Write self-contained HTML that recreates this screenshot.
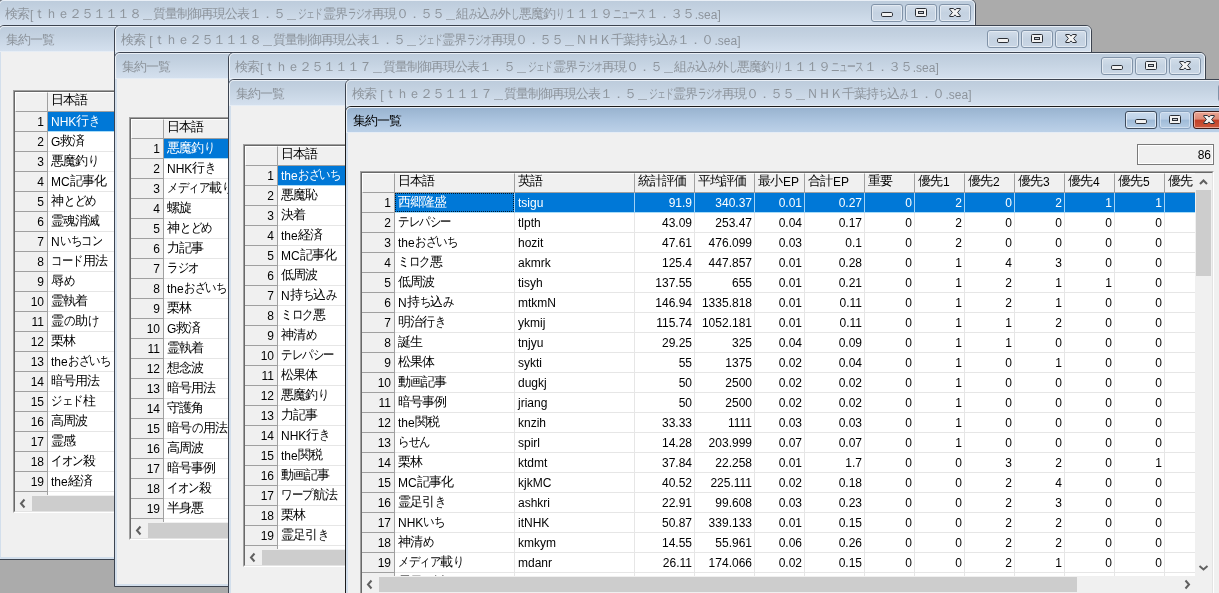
<!DOCTYPE html><html><head><meta charset="utf-8"><style>
*{box-sizing:border-box;margin:0;padding:0}
html,body{width:1219px;height:593px;overflow:hidden;background:#ababab;font-family:"Liberation Sans",sans-serif;font-size:12px;}
.w{position:absolute;border:1px solid #3d4450;border-radius:6px 6px 0 0;background:#d3dfec;}
.tb{position:absolute;left:0;right:0;top:0;height:26px;border-top:1px solid #e9eff6;border-bottom:1px solid #e6edf5;border-left:1px solid #eef3f8;border-right:1px solid #eef3f8;border-radius:5px 5px 0 0;
 background:linear-gradient(#bdccdc,#c5d3e2 40%,#d4e0ee);}
.tt{position:absolute;left:6px;top:7px;color:#8d949c;white-space:nowrap;line-height:14px;}
.btn{position:absolute;top:4px;width:32px;height:18px;border:1px solid #8193a8;border-radius:3px;background:linear-gradient(#d3deea,#c4d2e1 50%,#c9d6e5);box-shadow:inset 0 0 0 1px #e3eaf2;}
.body{position:absolute;left:2px;right:2px;top:26px;bottom:2px;background:#f0f0f0;}
.fr{position:absolute;border-left:1px solid #3d4450;}
.grid{position:absolute;background:#fff;border:1px solid #a0a0a0;border-right-color:#fff;border-bottom-color:#fff;overflow:hidden;}
.gin{position:absolute;left:0;top:0;right:0;bottom:0;overflow:hidden;border:1px solid #696969;border-right-color:#e3e3e3;border-bottom-color:#e3e3e3;}
.c{position:absolute;height:19px;line-height:20px;white-space:nowrap;overflow:hidden;padding:0 3px;color:#000;}
.h{background:#f0f0f0;}
</style></head><body><div id="root" style="position:absolute;left:0;top:0;width:1219px;height:593px;overflow:hidden;will-change:transform">
<div class="w" style="left:-2px;top:-1px;width:978px;height:60px"><div class="tb"><div class="tt" style="left:5px"><span style="font-size:13px;letter-spacing:-1px;margin-right:1px;position:relative;top:-1px">検索</span>[<span style="font-size:13px;letter-spacing:-1px;margin-right:1px;position:relative;top:-1px">ｔｈｅ２５１１１８＿質量制御再現公表１．５＿</span><span style="display:inline-block;width:24.30px;position:relative;top:-1px;white-space:nowrap"><span style="display:inline-block;font-size:13px;letter-spacing:-1px;transform:scaleX(0.675);transform-origin:0 0">ジェド</span></span><span style="font-size:13px;letter-spacing:-1px;margin-right:1px;position:relative;top:-1px">霊界</span><span style="display:inline-block;width:24.30px;position:relative;top:-1px;white-space:nowrap"><span style="display:inline-block;font-size:13px;letter-spacing:-1px;transform:scaleX(0.675);transform-origin:0 0">ラジオ</span></span><span style="font-size:13px;letter-spacing:-1px;margin-right:1px;position:relative;top:-1px">再現０．５５＿組</span><span style="display:inline-block;width:8.10px;position:relative;top:-1px;white-space:nowrap"><span style="display:inline-block;font-size:13px;letter-spacing:-1px;transform:scaleX(0.675);transform-origin:0 0">み</span></span><span style="font-size:13px;letter-spacing:-1px;margin-right:1px;position:relative;top:-1px">込</span><span style="display:inline-block;width:8.10px;position:relative;top:-1px;white-space:nowrap"><span style="display:inline-block;font-size:13px;letter-spacing:-1px;transform:scaleX(0.675);transform-origin:0 0">み</span></span><span style="font-size:13px;letter-spacing:-1px;margin-right:1px;position:relative;top:-1px">外</span><span style="display:inline-block;width:8.10px;position:relative;top:-1px;white-space:nowrap"><span style="display:inline-block;font-size:13px;letter-spacing:-1px;transform:scaleX(0.675);transform-origin:0 0">し</span></span><span style="font-size:13px;letter-spacing:-1px;margin-right:1px;position:relative;top:-1px">悪魔釣</span><span style="display:inline-block;width:8.10px;position:relative;top:-1px;white-space:nowrap"><span style="display:inline-block;font-size:13px;letter-spacing:-1px;transform:scaleX(0.675);transform-origin:0 0">り</span></span><span style="font-size:13px;letter-spacing:-1px;margin-right:1px;position:relative;top:-1px">１１１９</span><span style="display:inline-block;width:32.40px;position:relative;top:-1px;white-space:nowrap"><span style="display:inline-block;font-size:13px;letter-spacing:-1px;transform:scaleX(0.675);transform-origin:0 0">ニュース</span></span><span style="font-size:13px;letter-spacing:-1px;margin-right:1px;position:relative;top:-1px">１．３５</span>.sea]</div>
<div class="btn" style="left:871px;top:3px"><svg width="32" height="18" style="position:absolute;left:-1px;top:-1px"><rect x="10.5" y="8.5" width="11" height="4" rx="1.2" fill="#f2f2f2" stroke="#2b2f36" stroke-width="1"/></svg></div><div class="btn" style="left:905px;top:3px"><svg width="32" height="18" style="position:absolute;left:-1px;top:-1px"><rect x="10.5" y="4.5" width="11" height="8" rx="1" fill="#f2f2f2" stroke="#2b2f36"/><rect x="13.5" y="7.5" width="5" height="2" fill="#c8ccd2" stroke="#2b2f36"/></svg></div><div class="btn" style="left:939px;top:3px"><svg width="32" height="18" style="position:absolute;left:-1px;top:-1px"><path transform="translate(10,4)" d="M0.5 1 Q0.5 0.5 1 0.5 L4.3 0.5 L6 2.1 L7.7 0.5 L11 0.5 Q11.5 0.5 11.5 1 L8.6 4.5 L11.5 8 Q11.5 8.5 11 8.5 L7.7 8.5 L6 6.9 L4.3 8.5 L1 8.5 Q0.5 8.5 0.5 8 L3.4 4.5 Z" fill="#f4f4f4" stroke="#2b2f36" stroke-width="1" stroke-linejoin="round"/></svg></div>
</div></div>
<div class="w" style="left:-2px;top:25px;width:978px;height:535px;">
<div class="tb" style=""><div class="tt" style="left:6px;"><span style="font-size:13px;letter-spacing:-1px;margin-right:1px;position:relative;top:-1px">集約一覧</span></div></div>
<div class="body"></div></div>
<div class="grid" style="left:13px;top:90px;width:139px;height:423px"><div class="gin">
<div class="c h" style="left:0;top:0;width:33px;height:20px;border-right:1px solid #a0a0a0;border-bottom:1px solid #a0a0a0;border-top:1px solid #fff;border-left:1px solid #fff"></div>
<div class="c h" style="left:33px;top:0;width:170px;height:20px;border-right:1px solid #a0a0a0;border-bottom:1px solid #a0a0a0;border-top:1px solid #fff;padding-left:3px;line-height:15px"><span style="font-size:13px;letter-spacing:-1px;margin-right:1px;position:relative;top:-1px">日本語</span></div>
<div class="c h" style="left:0;top:20px;width:33px;height:20px;border-right:1px solid #a0a0a0;border-bottom:1px solid #a0a0a0;text-align:right;padding-right:3px">1</div>
<div class="c" style="left:33px;top:20px;width:170px;height:20px;border-bottom:1px solid #e6e6e6;background:#0078d7;color:#fff;border-right:1px solid #9fd0f5;border-bottom-color:#a8dcf8;padding-left:3px;">NHK<span style="font-size:13px;letter-spacing:-1px;margin-right:1px;position:relative;top:-1px">行</span><span style="display:inline-block;width:10.50px;position:relative;top:-1px;white-space:nowrap"><span style="display:inline-block;font-size:13px;letter-spacing:-1px;transform:scaleX(0.875);transform-origin:0 0">き</span></span></div>
<div class="c h" style="left:0;top:40px;width:33px;height:20px;border-right:1px solid #a0a0a0;border-bottom:1px solid #a0a0a0;text-align:right;padding-right:3px">2</div>
<div class="c" style="left:33px;top:40px;width:170px;height:20px;border-bottom:1px solid #e6e6e6;border-right:1px solid #e6e6e6;padding-left:3px;">G<span style="font-size:13px;letter-spacing:-1px;margin-right:1px;position:relative;top:-1px">救済</span></div>
<div class="c h" style="left:0;top:60px;width:33px;height:20px;border-right:1px solid #a0a0a0;border-bottom:1px solid #a0a0a0;text-align:right;padding-right:3px">3</div>
<div class="c" style="left:33px;top:60px;width:170px;height:20px;border-bottom:1px solid #e6e6e6;border-right:1px solid #e6e6e6;padding-left:3px;"><span style="font-size:13px;letter-spacing:-1px;margin-right:1px;position:relative;top:-1px">悪魔釣</span><span style="display:inline-block;width:10.50px;position:relative;top:-1px;white-space:nowrap"><span style="display:inline-block;font-size:13px;letter-spacing:-1px;transform:scaleX(0.875);transform-origin:0 0">り</span></span></div>
<div class="c h" style="left:0;top:80px;width:33px;height:20px;border-right:1px solid #a0a0a0;border-bottom:1px solid #a0a0a0;text-align:right;padding-right:3px">4</div>
<div class="c" style="left:33px;top:80px;width:170px;height:20px;border-bottom:1px solid #e6e6e6;border-right:1px solid #e6e6e6;padding-left:3px;">MC<span style="font-size:13px;letter-spacing:-1px;margin-right:1px;position:relative;top:-1px">記事化</span></div>
<div class="c h" style="left:0;top:100px;width:33px;height:20px;border-right:1px solid #a0a0a0;border-bottom:1px solid #a0a0a0;text-align:right;padding-right:3px">5</div>
<div class="c" style="left:33px;top:100px;width:170px;height:20px;border-bottom:1px solid #e6e6e6;border-right:1px solid #e6e6e6;padding-left:3px;"><span style="font-size:13px;letter-spacing:-1px;margin-right:1px;position:relative;top:-1px">神</span><span style="display:inline-block;width:31.50px;position:relative;top:-1px;white-space:nowrap"><span style="display:inline-block;font-size:13px;letter-spacing:-1px;transform:scaleX(0.875);transform-origin:0 0">とどめ</span></span></div>
<div class="c h" style="left:0;top:120px;width:33px;height:20px;border-right:1px solid #a0a0a0;border-bottom:1px solid #a0a0a0;text-align:right;padding-right:3px">6</div>
<div class="c" style="left:33px;top:120px;width:170px;height:20px;border-bottom:1px solid #e6e6e6;border-right:1px solid #e6e6e6;padding-left:3px;"><span style="font-size:13px;letter-spacing:-1px;margin-right:1px;position:relative;top:-1px">霊魂消滅</span></div>
<div class="c h" style="left:0;top:140px;width:33px;height:20px;border-right:1px solid #a0a0a0;border-bottom:1px solid #a0a0a0;text-align:right;padding-right:3px">7</div>
<div class="c" style="left:33px;top:140px;width:170px;height:20px;border-bottom:1px solid #e6e6e6;border-right:1px solid #e6e6e6;padding-left:3px;">N<span style="display:inline-block;width:42.00px;position:relative;top:-1px;white-space:nowrap"><span style="display:inline-block;font-size:13px;letter-spacing:-1px;transform:scaleX(0.875);transform-origin:0 0">いちコン</span></span></div>
<div class="c h" style="left:0;top:160px;width:33px;height:20px;border-right:1px solid #a0a0a0;border-bottom:1px solid #a0a0a0;text-align:right;padding-right:3px">8</div>
<div class="c" style="left:33px;top:160px;width:170px;height:20px;border-bottom:1px solid #e6e6e6;border-right:1px solid #e6e6e6;padding-left:3px;"><span style="display:inline-block;width:31.50px;position:relative;top:-1px;white-space:nowrap"><span style="display:inline-block;font-size:13px;letter-spacing:-1px;transform:scaleX(0.875);transform-origin:0 0">コード</span></span><span style="font-size:13px;letter-spacing:-1px;margin-right:1px;position:relative;top:-1px">用法</span></div>
<div class="c h" style="left:0;top:180px;width:33px;height:20px;border-right:1px solid #a0a0a0;border-bottom:1px solid #a0a0a0;text-align:right;padding-right:3px">9</div>
<div class="c" style="left:33px;top:180px;width:170px;height:20px;border-bottom:1px solid #e6e6e6;border-right:1px solid #e6e6e6;padding-left:3px;"><span style="font-size:13px;letter-spacing:-1px;margin-right:1px;position:relative;top:-1px">辱</span><span style="display:inline-block;width:10.50px;position:relative;top:-1px;white-space:nowrap"><span style="display:inline-block;font-size:13px;letter-spacing:-1px;transform:scaleX(0.875);transform-origin:0 0">め</span></span></div>
<div class="c h" style="left:0;top:200px;width:33px;height:20px;border-right:1px solid #a0a0a0;border-bottom:1px solid #a0a0a0;text-align:right;padding-right:3px">10</div>
<div class="c" style="left:33px;top:200px;width:170px;height:20px;border-bottom:1px solid #e6e6e6;border-right:1px solid #e6e6e6;padding-left:3px;"><span style="font-size:13px;letter-spacing:-1px;margin-right:1px;position:relative;top:-1px">霊執着</span></div>
<div class="c h" style="left:0;top:220px;width:33px;height:20px;border-right:1px solid #a0a0a0;border-bottom:1px solid #a0a0a0;text-align:right;padding-right:3px">11</div>
<div class="c" style="left:33px;top:220px;width:170px;height:20px;border-bottom:1px solid #e6e6e6;border-right:1px solid #e6e6e6;padding-left:3px;"><span style="font-size:13px;letter-spacing:-1px;margin-right:1px;position:relative;top:-1px">霊</span><span style="display:inline-block;width:10.50px;position:relative;top:-1px;white-space:nowrap"><span style="display:inline-block;font-size:13px;letter-spacing:-1px;transform:scaleX(0.875);transform-origin:0 0">の</span></span><span style="font-size:13px;letter-spacing:-1px;margin-right:1px;position:relative;top:-1px">助</span><span style="display:inline-block;width:10.50px;position:relative;top:-1px;white-space:nowrap"><span style="display:inline-block;font-size:13px;letter-spacing:-1px;transform:scaleX(0.875);transform-origin:0 0">け</span></span></div>
<div class="c h" style="left:0;top:240px;width:33px;height:20px;border-right:1px solid #a0a0a0;border-bottom:1px solid #a0a0a0;text-align:right;padding-right:3px">12</div>
<div class="c" style="left:33px;top:240px;width:170px;height:20px;border-bottom:1px solid #e6e6e6;border-right:1px solid #e6e6e6;padding-left:3px;"><span style="font-size:13px;letter-spacing:-1px;margin-right:1px;position:relative;top:-1px">栗林</span></div>
<div class="c h" style="left:0;top:260px;width:33px;height:20px;border-right:1px solid #a0a0a0;border-bottom:1px solid #a0a0a0;text-align:right;padding-right:3px">13</div>
<div class="c" style="left:33px;top:260px;width:170px;height:20px;border-bottom:1px solid #e6e6e6;border-right:1px solid #e6e6e6;padding-left:3px;">the<span style="display:inline-block;width:42.00px;position:relative;top:-1px;white-space:nowrap"><span style="display:inline-block;font-size:13px;letter-spacing:-1px;transform:scaleX(0.875);transform-origin:0 0">おざいち</span></span></div>
<div class="c h" style="left:0;top:280px;width:33px;height:20px;border-right:1px solid #a0a0a0;border-bottom:1px solid #a0a0a0;text-align:right;padding-right:3px">14</div>
<div class="c" style="left:33px;top:280px;width:170px;height:20px;border-bottom:1px solid #e6e6e6;border-right:1px solid #e6e6e6;padding-left:3px;"><span style="font-size:13px;letter-spacing:-1px;margin-right:1px;position:relative;top:-1px">暗号用法</span></div>
<div class="c h" style="left:0;top:300px;width:33px;height:20px;border-right:1px solid #a0a0a0;border-bottom:1px solid #a0a0a0;text-align:right;padding-right:3px">15</div>
<div class="c" style="left:33px;top:300px;width:170px;height:20px;border-bottom:1px solid #e6e6e6;border-right:1px solid #e6e6e6;padding-left:3px;"><span style="display:inline-block;width:31.50px;position:relative;top:-1px;white-space:nowrap"><span style="display:inline-block;font-size:13px;letter-spacing:-1px;transform:scaleX(0.875);transform-origin:0 0">ジェド</span></span><span style="font-size:13px;letter-spacing:-1px;margin-right:1px;position:relative;top:-1px">柱</span></div>
<div class="c h" style="left:0;top:320px;width:33px;height:20px;border-right:1px solid #a0a0a0;border-bottom:1px solid #a0a0a0;text-align:right;padding-right:3px">16</div>
<div class="c" style="left:33px;top:320px;width:170px;height:20px;border-bottom:1px solid #e6e6e6;border-right:1px solid #e6e6e6;padding-left:3px;"><span style="font-size:13px;letter-spacing:-1px;margin-right:1px;position:relative;top:-1px">高周波</span></div>
<div class="c h" style="left:0;top:340px;width:33px;height:20px;border-right:1px solid #a0a0a0;border-bottom:1px solid #a0a0a0;text-align:right;padding-right:3px">17</div>
<div class="c" style="left:33px;top:340px;width:170px;height:20px;border-bottom:1px solid #e6e6e6;border-right:1px solid #e6e6e6;padding-left:3px;"><span style="font-size:13px;letter-spacing:-1px;margin-right:1px;position:relative;top:-1px">霊感</span></div>
<div class="c h" style="left:0;top:360px;width:33px;height:20px;border-right:1px solid #a0a0a0;border-bottom:1px solid #a0a0a0;text-align:right;padding-right:3px">18</div>
<div class="c" style="left:33px;top:360px;width:170px;height:20px;border-bottom:1px solid #e6e6e6;border-right:1px solid #e6e6e6;padding-left:3px;"><span style="display:inline-block;width:31.50px;position:relative;top:-1px;white-space:nowrap"><span style="display:inline-block;font-size:13px;letter-spacing:-1px;transform:scaleX(0.875);transform-origin:0 0">イオン</span></span><span style="font-size:13px;letter-spacing:-1px;margin-right:1px;position:relative;top:-1px">殺</span></div>
<div class="c h" style="left:0;top:380px;width:33px;height:20px;border-right:1px solid #a0a0a0;border-bottom:1px solid #a0a0a0;text-align:right;padding-right:3px">19</div>
<div class="c" style="left:33px;top:380px;width:170px;height:20px;border-bottom:1px solid #e6e6e6;border-right:1px solid #e6e6e6;padding-left:3px;">the<span style="font-size:13px;letter-spacing:-1px;margin-right:1px;position:relative;top:-1px">経済</span></div>
<div class="c h" style="left:0;top:400px;width:33px;height:20px;border-right:1px solid #a0a0a0;border-bottom:1px solid #a0a0a0;text-align:right;padding-right:3px">20</div>
<div class="c" style="left:33px;top:400px;width:170px;height:20px;border-bottom:1px solid #e6e6e6;border-right:1px solid #e6e6e6;padding-left:3px;"><span style="display:inline-block;width:31.50px;position:relative;top:-1px;white-space:nowrap"><span style="display:inline-block;font-size:13px;letter-spacing:-1px;transform:scaleX(0.875);transform-origin:0 0">コード</span></span></div>
<div style="position:absolute;left:0;top:403px;width:139px;height:17px;background:#f0f0f0"></div>
<svg width="17" height="17" style="position:absolute;left:0;top:403px"><path d="M9.5 4.5 L6 8.5 L9.5 12.5" fill="none" stroke="#606060" stroke-width="2"/></svg>
<div style="position:absolute;left:17px;top:404px;width:123px;height:15px;background:#cdcdcd"></div>
</div></div>
<div class="w" style="left:114px;top:25px;width:978px;height:60px"><div class="tb"><div class="tt" style="left:5px"><span style="font-size:13px;letter-spacing:-1px;margin-right:1px;position:relative;top:-1px">検索</span> [<span style="font-size:13px;letter-spacing:-1px;margin-right:1px;position:relative;top:-1px">ｔｈｅ２５１１１８＿質量制御再現公表１．５＿</span><span style="display:inline-block;width:24.30px;position:relative;top:-1px;white-space:nowrap"><span style="display:inline-block;font-size:13px;letter-spacing:-1px;transform:scaleX(0.675);transform-origin:0 0">ジェド</span></span><span style="font-size:13px;letter-spacing:-1px;margin-right:1px;position:relative;top:-1px">霊界</span><span style="display:inline-block;width:24.30px;position:relative;top:-1px;white-space:nowrap"><span style="display:inline-block;font-size:13px;letter-spacing:-1px;transform:scaleX(0.675);transform-origin:0 0">ラジオ</span></span><span style="font-size:13px;letter-spacing:-1px;margin-right:1px;position:relative;top:-1px">再現０．５５＿ＮＨＫ千葉持</span><span style="display:inline-block;width:8.10px;position:relative;top:-1px;white-space:nowrap"><span style="display:inline-block;font-size:13px;letter-spacing:-1px;transform:scaleX(0.675);transform-origin:0 0">ち</span></span><span style="font-size:13px;letter-spacing:-1px;margin-right:1px;position:relative;top:-1px">込</span><span style="display:inline-block;width:8.10px;position:relative;top:-1px;white-space:nowrap"><span style="display:inline-block;font-size:13px;letter-spacing:-1px;transform:scaleX(0.675);transform-origin:0 0">み</span></span><span style="font-size:13px;letter-spacing:-1px;margin-right:1px;position:relative;top:-1px">１．０</span>.sea]</div>
<div class="btn" style="left:871px;top:3px"><svg width="32" height="18" style="position:absolute;left:-1px;top:-1px"><rect x="10.5" y="8.5" width="11" height="4" rx="1.2" fill="#f2f2f2" stroke="#2b2f36" stroke-width="1"/></svg></div><div class="btn" style="left:905px;top:3px"><svg width="32" height="18" style="position:absolute;left:-1px;top:-1px"><rect x="10.5" y="4.5" width="11" height="8" rx="1" fill="#f2f2f2" stroke="#2b2f36"/><rect x="13.5" y="7.5" width="5" height="2" fill="#c8ccd2" stroke="#2b2f36"/></svg></div><div class="btn" style="left:939px;top:3px"><svg width="32" height="18" style="position:absolute;left:-1px;top:-1px"><path transform="translate(10,4)" d="M0.5 1 Q0.5 0.5 1 0.5 L4.3 0.5 L6 2.1 L7.7 0.5 L11 0.5 Q11.5 0.5 11.5 1 L8.6 4.5 L11.5 8 Q11.5 8.5 11 8.5 L7.7 8.5 L6 6.9 L4.3 8.5 L1 8.5 Q0.5 8.5 0.5 8 L3.4 4.5 Z" fill="#f4f4f4" stroke="#2b2f36" stroke-width="1" stroke-linejoin="round"/></svg></div>
</div></div>
<div class="w" style="left:114px;top:52px;width:978px;height:535px;">
<div class="tb" style=""><div class="tt" style="left:6px;"><span style="font-size:13px;letter-spacing:-1px;margin-right:1px;position:relative;top:-1px">集約一覧</span></div></div>
<div class="body"></div></div>
<div class="grid" style="left:129px;top:117px;width:139px;height:423px"><div class="gin">
<div class="c h" style="left:0;top:0;width:33px;height:20px;border-right:1px solid #a0a0a0;border-bottom:1px solid #a0a0a0;border-top:1px solid #fff;border-left:1px solid #fff"></div>
<div class="c h" style="left:33px;top:0;width:170px;height:20px;border-right:1px solid #a0a0a0;border-bottom:1px solid #a0a0a0;border-top:1px solid #fff;padding-left:3px;line-height:15px"><span style="font-size:13px;letter-spacing:-1px;margin-right:1px;position:relative;top:-1px">日本語</span></div>
<div class="c h" style="left:0;top:20px;width:33px;height:20px;border-right:1px solid #a0a0a0;border-bottom:1px solid #a0a0a0;text-align:right;padding-right:3px">1</div>
<div class="c" style="left:33px;top:20px;width:170px;height:20px;border-bottom:1px solid #e6e6e6;background:#0078d7;color:#fff;border-right:1px solid #9fd0f5;border-bottom-color:#a8dcf8;padding-left:3px;"><span style="font-size:13px;letter-spacing:-1px;margin-right:1px;position:relative;top:-1px">悪魔釣</span><span style="display:inline-block;width:10.50px;position:relative;top:-1px;white-space:nowrap"><span style="display:inline-block;font-size:13px;letter-spacing:-1px;transform:scaleX(0.875);transform-origin:0 0">り</span></span></div>
<div class="c h" style="left:0;top:40px;width:33px;height:20px;border-right:1px solid #a0a0a0;border-bottom:1px solid #a0a0a0;text-align:right;padding-right:3px">2</div>
<div class="c" style="left:33px;top:40px;width:170px;height:20px;border-bottom:1px solid #e6e6e6;border-right:1px solid #e6e6e6;padding-left:3px;">NHK<span style="font-size:13px;letter-spacing:-1px;margin-right:1px;position:relative;top:-1px">行</span><span style="display:inline-block;width:10.50px;position:relative;top:-1px;white-space:nowrap"><span style="display:inline-block;font-size:13px;letter-spacing:-1px;transform:scaleX(0.875);transform-origin:0 0">き</span></span></div>
<div class="c h" style="left:0;top:60px;width:33px;height:20px;border-right:1px solid #a0a0a0;border-bottom:1px solid #a0a0a0;text-align:right;padding-right:3px">3</div>
<div class="c" style="left:33px;top:60px;width:170px;height:20px;border-bottom:1px solid #e6e6e6;border-right:1px solid #e6e6e6;padding-left:3px;"><span style="display:inline-block;width:42.00px;position:relative;top:-1px;white-space:nowrap"><span style="display:inline-block;font-size:13px;letter-spacing:-1px;transform:scaleX(0.875);transform-origin:0 0">メディア</span></span><span style="font-size:13px;letter-spacing:-1px;margin-right:1px;position:relative;top:-1px">載</span><span style="display:inline-block;width:10.50px;position:relative;top:-1px;white-space:nowrap"><span style="display:inline-block;font-size:13px;letter-spacing:-1px;transform:scaleX(0.875);transform-origin:0 0">り</span></span></div>
<div class="c h" style="left:0;top:80px;width:33px;height:20px;border-right:1px solid #a0a0a0;border-bottom:1px solid #a0a0a0;text-align:right;padding-right:3px">4</div>
<div class="c" style="left:33px;top:80px;width:170px;height:20px;border-bottom:1px solid #e6e6e6;border-right:1px solid #e6e6e6;padding-left:3px;"><span style="font-size:13px;letter-spacing:-1px;margin-right:1px;position:relative;top:-1px">螺旋</span></div>
<div class="c h" style="left:0;top:100px;width:33px;height:20px;border-right:1px solid #a0a0a0;border-bottom:1px solid #a0a0a0;text-align:right;padding-right:3px">5</div>
<div class="c" style="left:33px;top:100px;width:170px;height:20px;border-bottom:1px solid #e6e6e6;border-right:1px solid #e6e6e6;padding-left:3px;"><span style="font-size:13px;letter-spacing:-1px;margin-right:1px;position:relative;top:-1px">神</span><span style="display:inline-block;width:31.50px;position:relative;top:-1px;white-space:nowrap"><span style="display:inline-block;font-size:13px;letter-spacing:-1px;transform:scaleX(0.875);transform-origin:0 0">とどめ</span></span></div>
<div class="c h" style="left:0;top:120px;width:33px;height:20px;border-right:1px solid #a0a0a0;border-bottom:1px solid #a0a0a0;text-align:right;padding-right:3px">6</div>
<div class="c" style="left:33px;top:120px;width:170px;height:20px;border-bottom:1px solid #e6e6e6;border-right:1px solid #e6e6e6;padding-left:3px;"><span style="font-size:13px;letter-spacing:-1px;margin-right:1px;position:relative;top:-1px">力記事</span></div>
<div class="c h" style="left:0;top:140px;width:33px;height:20px;border-right:1px solid #a0a0a0;border-bottom:1px solid #a0a0a0;text-align:right;padding-right:3px">7</div>
<div class="c" style="left:33px;top:140px;width:170px;height:20px;border-bottom:1px solid #e6e6e6;border-right:1px solid #e6e6e6;padding-left:3px;"><span style="display:inline-block;width:31.50px;position:relative;top:-1px;white-space:nowrap"><span style="display:inline-block;font-size:13px;letter-spacing:-1px;transform:scaleX(0.875);transform-origin:0 0">ラジオ</span></span></div>
<div class="c h" style="left:0;top:160px;width:33px;height:20px;border-right:1px solid #a0a0a0;border-bottom:1px solid #a0a0a0;text-align:right;padding-right:3px">8</div>
<div class="c" style="left:33px;top:160px;width:170px;height:20px;border-bottom:1px solid #e6e6e6;border-right:1px solid #e6e6e6;padding-left:3px;">the<span style="display:inline-block;width:42.00px;position:relative;top:-1px;white-space:nowrap"><span style="display:inline-block;font-size:13px;letter-spacing:-1px;transform:scaleX(0.875);transform-origin:0 0">おざいち</span></span></div>
<div class="c h" style="left:0;top:180px;width:33px;height:20px;border-right:1px solid #a0a0a0;border-bottom:1px solid #a0a0a0;text-align:right;padding-right:3px">9</div>
<div class="c" style="left:33px;top:180px;width:170px;height:20px;border-bottom:1px solid #e6e6e6;border-right:1px solid #e6e6e6;padding-left:3px;"><span style="font-size:13px;letter-spacing:-1px;margin-right:1px;position:relative;top:-1px">栗林</span></div>
<div class="c h" style="left:0;top:200px;width:33px;height:20px;border-right:1px solid #a0a0a0;border-bottom:1px solid #a0a0a0;text-align:right;padding-right:3px">10</div>
<div class="c" style="left:33px;top:200px;width:170px;height:20px;border-bottom:1px solid #e6e6e6;border-right:1px solid #e6e6e6;padding-left:3px;">G<span style="font-size:13px;letter-spacing:-1px;margin-right:1px;position:relative;top:-1px">救済</span></div>
<div class="c h" style="left:0;top:220px;width:33px;height:20px;border-right:1px solid #a0a0a0;border-bottom:1px solid #a0a0a0;text-align:right;padding-right:3px">11</div>
<div class="c" style="left:33px;top:220px;width:170px;height:20px;border-bottom:1px solid #e6e6e6;border-right:1px solid #e6e6e6;padding-left:3px;"><span style="font-size:13px;letter-spacing:-1px;margin-right:1px;position:relative;top:-1px">霊執着</span></div>
<div class="c h" style="left:0;top:240px;width:33px;height:20px;border-right:1px solid #a0a0a0;border-bottom:1px solid #a0a0a0;text-align:right;padding-right:3px">12</div>
<div class="c" style="left:33px;top:240px;width:170px;height:20px;border-bottom:1px solid #e6e6e6;border-right:1px solid #e6e6e6;padding-left:3px;"><span style="font-size:13px;letter-spacing:-1px;margin-right:1px;position:relative;top:-1px">想念波</span></div>
<div class="c h" style="left:0;top:260px;width:33px;height:20px;border-right:1px solid #a0a0a0;border-bottom:1px solid #a0a0a0;text-align:right;padding-right:3px">13</div>
<div class="c" style="left:33px;top:260px;width:170px;height:20px;border-bottom:1px solid #e6e6e6;border-right:1px solid #e6e6e6;padding-left:3px;"><span style="font-size:13px;letter-spacing:-1px;margin-right:1px;position:relative;top:-1px">暗号用法</span></div>
<div class="c h" style="left:0;top:280px;width:33px;height:20px;border-right:1px solid #a0a0a0;border-bottom:1px solid #a0a0a0;text-align:right;padding-right:3px">14</div>
<div class="c" style="left:33px;top:280px;width:170px;height:20px;border-bottom:1px solid #e6e6e6;border-right:1px solid #e6e6e6;padding-left:3px;"><span style="font-size:13px;letter-spacing:-1px;margin-right:1px;position:relative;top:-1px">守護角</span></div>
<div class="c h" style="left:0;top:300px;width:33px;height:20px;border-right:1px solid #a0a0a0;border-bottom:1px solid #a0a0a0;text-align:right;padding-right:3px">15</div>
<div class="c" style="left:33px;top:300px;width:170px;height:20px;border-bottom:1px solid #e6e6e6;border-right:1px solid #e6e6e6;padding-left:3px;"><span style="font-size:13px;letter-spacing:-1px;margin-right:1px;position:relative;top:-1px">暗号</span><span style="display:inline-block;width:10.50px;position:relative;top:-1px;white-space:nowrap"><span style="display:inline-block;font-size:13px;letter-spacing:-1px;transform:scaleX(0.875);transform-origin:0 0">の</span></span><span style="font-size:13px;letter-spacing:-1px;margin-right:1px;position:relative;top:-1px">用法</span></div>
<div class="c h" style="left:0;top:320px;width:33px;height:20px;border-right:1px solid #a0a0a0;border-bottom:1px solid #a0a0a0;text-align:right;padding-right:3px">16</div>
<div class="c" style="left:33px;top:320px;width:170px;height:20px;border-bottom:1px solid #e6e6e6;border-right:1px solid #e6e6e6;padding-left:3px;"><span style="font-size:13px;letter-spacing:-1px;margin-right:1px;position:relative;top:-1px">高周波</span></div>
<div class="c h" style="left:0;top:340px;width:33px;height:20px;border-right:1px solid #a0a0a0;border-bottom:1px solid #a0a0a0;text-align:right;padding-right:3px">17</div>
<div class="c" style="left:33px;top:340px;width:170px;height:20px;border-bottom:1px solid #e6e6e6;border-right:1px solid #e6e6e6;padding-left:3px;"><span style="font-size:13px;letter-spacing:-1px;margin-right:1px;position:relative;top:-1px">暗号事例</span></div>
<div class="c h" style="left:0;top:360px;width:33px;height:20px;border-right:1px solid #a0a0a0;border-bottom:1px solid #a0a0a0;text-align:right;padding-right:3px">18</div>
<div class="c" style="left:33px;top:360px;width:170px;height:20px;border-bottom:1px solid #e6e6e6;border-right:1px solid #e6e6e6;padding-left:3px;"><span style="display:inline-block;width:31.50px;position:relative;top:-1px;white-space:nowrap"><span style="display:inline-block;font-size:13px;letter-spacing:-1px;transform:scaleX(0.875);transform-origin:0 0">イオン</span></span><span style="font-size:13px;letter-spacing:-1px;margin-right:1px;position:relative;top:-1px">殺</span></div>
<div class="c h" style="left:0;top:380px;width:33px;height:20px;border-right:1px solid #a0a0a0;border-bottom:1px solid #a0a0a0;text-align:right;padding-right:3px">19</div>
<div class="c" style="left:33px;top:380px;width:170px;height:20px;border-bottom:1px solid #e6e6e6;border-right:1px solid #e6e6e6;padding-left:3px;"><span style="font-size:13px;letter-spacing:-1px;margin-right:1px;position:relative;top:-1px">半身悪</span></div>
<div class="c h" style="left:0;top:400px;width:33px;height:20px;border-right:1px solid #a0a0a0;border-bottom:1px solid #a0a0a0;text-align:right;padding-right:3px">20</div>
<div class="c" style="left:33px;top:400px;width:170px;height:20px;border-bottom:1px solid #e6e6e6;border-right:1px solid #e6e6e6;padding-left:3px;"><span style="display:inline-block;width:42.00px;position:relative;top:-1px;white-space:nowrap"><span style="display:inline-block;font-size:13px;letter-spacing:-1px;transform:scaleX(0.875);transform-origin:0 0">メディア</span></span></div>
<div style="position:absolute;left:0;top:403px;width:139px;height:17px;background:#f0f0f0"></div>
<svg width="17" height="17" style="position:absolute;left:0;top:403px"><path d="M9.5 4.5 L6 8.5 L9.5 12.5" fill="none" stroke="#606060" stroke-width="2"/></svg>
<div style="position:absolute;left:17px;top:404px;width:123px;height:15px;background:#cdcdcd"></div>
</div></div>
<div class="w" style="left:228px;top:52px;width:978px;height:60px"><div class="tb"><div class="tt" style="left:5px"><span style="font-size:13px;letter-spacing:-1px;margin-right:1px;position:relative;top:-1px">検索</span>[<span style="font-size:13px;letter-spacing:-1px;margin-right:1px;position:relative;top:-1px">ｔｈｅ２５１１１７＿質量制御再現公表１．５＿</span><span style="display:inline-block;width:24.30px;position:relative;top:-1px;white-space:nowrap"><span style="display:inline-block;font-size:13px;letter-spacing:-1px;transform:scaleX(0.675);transform-origin:0 0">ジェド</span></span><span style="font-size:13px;letter-spacing:-1px;margin-right:1px;position:relative;top:-1px">霊界</span><span style="display:inline-block;width:24.30px;position:relative;top:-1px;white-space:nowrap"><span style="display:inline-block;font-size:13px;letter-spacing:-1px;transform:scaleX(0.675);transform-origin:0 0">ラジオ</span></span><span style="font-size:13px;letter-spacing:-1px;margin-right:1px;position:relative;top:-1px">再現０．５＿組</span><span style="display:inline-block;width:8.10px;position:relative;top:-1px;white-space:nowrap"><span style="display:inline-block;font-size:13px;letter-spacing:-1px;transform:scaleX(0.675);transform-origin:0 0">み</span></span><span style="font-size:13px;letter-spacing:-1px;margin-right:1px;position:relative;top:-1px">込</span><span style="display:inline-block;width:8.10px;position:relative;top:-1px;white-space:nowrap"><span style="display:inline-block;font-size:13px;letter-spacing:-1px;transform:scaleX(0.675);transform-origin:0 0">み</span></span><span style="font-size:13px;letter-spacing:-1px;margin-right:1px;position:relative;top:-1px">外</span><span style="display:inline-block;width:8.10px;position:relative;top:-1px;white-space:nowrap"><span style="display:inline-block;font-size:13px;letter-spacing:-1px;transform:scaleX(0.675);transform-origin:0 0">し</span></span><span style="font-size:13px;letter-spacing:-1px;margin-right:1px;position:relative;top:-1px">悪魔釣</span><span style="display:inline-block;width:8.10px;position:relative;top:-1px;white-space:nowrap"><span style="display:inline-block;font-size:13px;letter-spacing:-1px;transform:scaleX(0.675);transform-origin:0 0">り</span></span><span style="font-size:13px;letter-spacing:-1px;margin-right:1px;position:relative;top:-1px">１１１９</span><span style="display:inline-block;width:32.40px;position:relative;top:-1px;white-space:nowrap"><span style="display:inline-block;font-size:13px;letter-spacing:-1px;transform:scaleX(0.675);transform-origin:0 0">ニュース</span></span><span style="font-size:13px;letter-spacing:-1px;margin-right:1px;position:relative;top:-1px">１．３５</span>.sea]</div>
<div class="btn" style="left:871px;top:3px"><svg width="32" height="18" style="position:absolute;left:-1px;top:-1px"><rect x="10.5" y="8.5" width="11" height="4" rx="1.2" fill="#f2f2f2" stroke="#2b2f36" stroke-width="1"/></svg></div><div class="btn" style="left:905px;top:3px"><svg width="32" height="18" style="position:absolute;left:-1px;top:-1px"><rect x="10.5" y="4.5" width="11" height="8" rx="1" fill="#f2f2f2" stroke="#2b2f36"/><rect x="13.5" y="7.5" width="5" height="2" fill="#c8ccd2" stroke="#2b2f36"/></svg></div><div class="btn" style="left:939px;top:3px"><svg width="32" height="18" style="position:absolute;left:-1px;top:-1px"><path transform="translate(10,4)" d="M0.5 1 Q0.5 0.5 1 0.5 L4.3 0.5 L6 2.1 L7.7 0.5 L11 0.5 Q11.5 0.5 11.5 1 L8.6 4.5 L11.5 8 Q11.5 8.5 11 8.5 L7.7 8.5 L6 6.9 L4.3 8.5 L1 8.5 Q0.5 8.5 0.5 8 L3.4 4.5 Z" fill="#f4f4f4" stroke="#2b2f36" stroke-width="1" stroke-linejoin="round"/></svg></div>
</div></div>
<div class="w" style="left:228px;top:79px;width:978px;height:535px;">
<div class="tb" style=""><div class="tt" style="left:6px;"><span style="font-size:13px;letter-spacing:-1px;margin-right:1px;position:relative;top:-1px">集約一覧</span></div></div>
<div class="body"></div></div>
<div class="grid" style="left:243px;top:144px;width:139px;height:423px"><div class="gin">
<div class="c h" style="left:0;top:0;width:33px;height:20px;border-right:1px solid #a0a0a0;border-bottom:1px solid #a0a0a0;border-top:1px solid #fff;border-left:1px solid #fff"></div>
<div class="c h" style="left:33px;top:0;width:170px;height:20px;border-right:1px solid #a0a0a0;border-bottom:1px solid #a0a0a0;border-top:1px solid #fff;padding-left:3px;line-height:15px"><span style="font-size:13px;letter-spacing:-1px;margin-right:1px;position:relative;top:-1px">日本語</span></div>
<div class="c h" style="left:0;top:20px;width:33px;height:20px;border-right:1px solid #a0a0a0;border-bottom:1px solid #a0a0a0;text-align:right;padding-right:3px">1</div>
<div class="c" style="left:33px;top:20px;width:170px;height:20px;border-bottom:1px solid #e6e6e6;background:#0078d7;color:#fff;border-right:1px solid #9fd0f5;border-bottom-color:#a8dcf8;padding-left:3px;">the<span style="display:inline-block;width:42.00px;position:relative;top:-1px;white-space:nowrap"><span style="display:inline-block;font-size:13px;letter-spacing:-1px;transform:scaleX(0.875);transform-origin:0 0">おざいち</span></span></div>
<div class="c h" style="left:0;top:40px;width:33px;height:20px;border-right:1px solid #a0a0a0;border-bottom:1px solid #a0a0a0;text-align:right;padding-right:3px">2</div>
<div class="c" style="left:33px;top:40px;width:170px;height:20px;border-bottom:1px solid #e6e6e6;border-right:1px solid #e6e6e6;padding-left:3px;"><span style="font-size:13px;letter-spacing:-1px;margin-right:1px;position:relative;top:-1px">悪魔恥</span></div>
<div class="c h" style="left:0;top:60px;width:33px;height:20px;border-right:1px solid #a0a0a0;border-bottom:1px solid #a0a0a0;text-align:right;padding-right:3px">3</div>
<div class="c" style="left:33px;top:60px;width:170px;height:20px;border-bottom:1px solid #e6e6e6;border-right:1px solid #e6e6e6;padding-left:3px;"><span style="font-size:13px;letter-spacing:-1px;margin-right:1px;position:relative;top:-1px">決着</span></div>
<div class="c h" style="left:0;top:80px;width:33px;height:20px;border-right:1px solid #a0a0a0;border-bottom:1px solid #a0a0a0;text-align:right;padding-right:3px">4</div>
<div class="c" style="left:33px;top:80px;width:170px;height:20px;border-bottom:1px solid #e6e6e6;border-right:1px solid #e6e6e6;padding-left:3px;">the<span style="font-size:13px;letter-spacing:-1px;margin-right:1px;position:relative;top:-1px">経済</span></div>
<div class="c h" style="left:0;top:100px;width:33px;height:20px;border-right:1px solid #a0a0a0;border-bottom:1px solid #a0a0a0;text-align:right;padding-right:3px">5</div>
<div class="c" style="left:33px;top:100px;width:170px;height:20px;border-bottom:1px solid #e6e6e6;border-right:1px solid #e6e6e6;padding-left:3px;">MC<span style="font-size:13px;letter-spacing:-1px;margin-right:1px;position:relative;top:-1px">記事化</span></div>
<div class="c h" style="left:0;top:120px;width:33px;height:20px;border-right:1px solid #a0a0a0;border-bottom:1px solid #a0a0a0;text-align:right;padding-right:3px">6</div>
<div class="c" style="left:33px;top:120px;width:170px;height:20px;border-bottom:1px solid #e6e6e6;border-right:1px solid #e6e6e6;padding-left:3px;"><span style="font-size:13px;letter-spacing:-1px;margin-right:1px;position:relative;top:-1px">低周波</span></div>
<div class="c h" style="left:0;top:140px;width:33px;height:20px;border-right:1px solid #a0a0a0;border-bottom:1px solid #a0a0a0;text-align:right;padding-right:3px">7</div>
<div class="c" style="left:33px;top:140px;width:170px;height:20px;border-bottom:1px solid #e6e6e6;border-right:1px solid #e6e6e6;padding-left:3px;">N<span style="font-size:13px;letter-spacing:-1px;margin-right:1px;position:relative;top:-1px">持</span><span style="display:inline-block;width:10.50px;position:relative;top:-1px;white-space:nowrap"><span style="display:inline-block;font-size:13px;letter-spacing:-1px;transform:scaleX(0.875);transform-origin:0 0">ち</span></span><span style="font-size:13px;letter-spacing:-1px;margin-right:1px;position:relative;top:-1px">込</span><span style="display:inline-block;width:10.50px;position:relative;top:-1px;white-space:nowrap"><span style="display:inline-block;font-size:13px;letter-spacing:-1px;transform:scaleX(0.875);transform-origin:0 0">み</span></span></div>
<div class="c h" style="left:0;top:160px;width:33px;height:20px;border-right:1px solid #a0a0a0;border-bottom:1px solid #a0a0a0;text-align:right;padding-right:3px">8</div>
<div class="c" style="left:33px;top:160px;width:170px;height:20px;border-bottom:1px solid #e6e6e6;border-right:1px solid #e6e6e6;padding-left:3px;"><span style="display:inline-block;width:31.50px;position:relative;top:-1px;white-space:nowrap"><span style="display:inline-block;font-size:13px;letter-spacing:-1px;transform:scaleX(0.875);transform-origin:0 0">ミロク</span></span><span style="font-size:13px;letter-spacing:-1px;margin-right:1px;position:relative;top:-1px">悪</span></div>
<div class="c h" style="left:0;top:180px;width:33px;height:20px;border-right:1px solid #a0a0a0;border-bottom:1px solid #a0a0a0;text-align:right;padding-right:3px">9</div>
<div class="c" style="left:33px;top:180px;width:170px;height:20px;border-bottom:1px solid #e6e6e6;border-right:1px solid #e6e6e6;padding-left:3px;"><span style="font-size:13px;letter-spacing:-1px;margin-right:1px;position:relative;top:-1px">神清</span><span style="display:inline-block;width:10.50px;position:relative;top:-1px;white-space:nowrap"><span style="display:inline-block;font-size:13px;letter-spacing:-1px;transform:scaleX(0.875);transform-origin:0 0">め</span></span></div>
<div class="c h" style="left:0;top:200px;width:33px;height:20px;border-right:1px solid #a0a0a0;border-bottom:1px solid #a0a0a0;text-align:right;padding-right:3px">10</div>
<div class="c" style="left:33px;top:200px;width:170px;height:20px;border-bottom:1px solid #e6e6e6;border-right:1px solid #e6e6e6;padding-left:3px;"><span style="display:inline-block;width:52.50px;position:relative;top:-1px;white-space:nowrap"><span style="display:inline-block;font-size:13px;letter-spacing:-1px;transform:scaleX(0.875);transform-origin:0 0">テレパシー</span></span></div>
<div class="c h" style="left:0;top:220px;width:33px;height:20px;border-right:1px solid #a0a0a0;border-bottom:1px solid #a0a0a0;text-align:right;padding-right:3px">11</div>
<div class="c" style="left:33px;top:220px;width:170px;height:20px;border-bottom:1px solid #e6e6e6;border-right:1px solid #e6e6e6;padding-left:3px;"><span style="font-size:13px;letter-spacing:-1px;margin-right:1px;position:relative;top:-1px">松果体</span></div>
<div class="c h" style="left:0;top:240px;width:33px;height:20px;border-right:1px solid #a0a0a0;border-bottom:1px solid #a0a0a0;text-align:right;padding-right:3px">12</div>
<div class="c" style="left:33px;top:240px;width:170px;height:20px;border-bottom:1px solid #e6e6e6;border-right:1px solid #e6e6e6;padding-left:3px;"><span style="font-size:13px;letter-spacing:-1px;margin-right:1px;position:relative;top:-1px">悪魔釣</span><span style="display:inline-block;width:10.50px;position:relative;top:-1px;white-space:nowrap"><span style="display:inline-block;font-size:13px;letter-spacing:-1px;transform:scaleX(0.875);transform-origin:0 0">り</span></span></div>
<div class="c h" style="left:0;top:260px;width:33px;height:20px;border-right:1px solid #a0a0a0;border-bottom:1px solid #a0a0a0;text-align:right;padding-right:3px">13</div>
<div class="c" style="left:33px;top:260px;width:170px;height:20px;border-bottom:1px solid #e6e6e6;border-right:1px solid #e6e6e6;padding-left:3px;"><span style="font-size:13px;letter-spacing:-1px;margin-right:1px;position:relative;top:-1px">力記事</span></div>
<div class="c h" style="left:0;top:280px;width:33px;height:20px;border-right:1px solid #a0a0a0;border-bottom:1px solid #a0a0a0;text-align:right;padding-right:3px">14</div>
<div class="c" style="left:33px;top:280px;width:170px;height:20px;border-bottom:1px solid #e6e6e6;border-right:1px solid #e6e6e6;padding-left:3px;">NHK<span style="font-size:13px;letter-spacing:-1px;margin-right:1px;position:relative;top:-1px">行</span><span style="display:inline-block;width:10.50px;position:relative;top:-1px;white-space:nowrap"><span style="display:inline-block;font-size:13px;letter-spacing:-1px;transform:scaleX(0.875);transform-origin:0 0">き</span></span></div>
<div class="c h" style="left:0;top:300px;width:33px;height:20px;border-right:1px solid #a0a0a0;border-bottom:1px solid #a0a0a0;text-align:right;padding-right:3px">15</div>
<div class="c" style="left:33px;top:300px;width:170px;height:20px;border-bottom:1px solid #e6e6e6;border-right:1px solid #e6e6e6;padding-left:3px;">the<span style="font-size:13px;letter-spacing:-1px;margin-right:1px;position:relative;top:-1px">関税</span></div>
<div class="c h" style="left:0;top:320px;width:33px;height:20px;border-right:1px solid #a0a0a0;border-bottom:1px solid #a0a0a0;text-align:right;padding-right:3px">16</div>
<div class="c" style="left:33px;top:320px;width:170px;height:20px;border-bottom:1px solid #e6e6e6;border-right:1px solid #e6e6e6;padding-left:3px;"><span style="font-size:13px;letter-spacing:-1px;margin-right:1px;position:relative;top:-1px">動画記事</span></div>
<div class="c h" style="left:0;top:340px;width:33px;height:20px;border-right:1px solid #a0a0a0;border-bottom:1px solid #a0a0a0;text-align:right;padding-right:3px">17</div>
<div class="c" style="left:33px;top:340px;width:170px;height:20px;border-bottom:1px solid #e6e6e6;border-right:1px solid #e6e6e6;padding-left:3px;"><span style="display:inline-block;width:31.50px;position:relative;top:-1px;white-space:nowrap"><span style="display:inline-block;font-size:13px;letter-spacing:-1px;transform:scaleX(0.875);transform-origin:0 0">ワープ</span></span><span style="font-size:13px;letter-spacing:-1px;margin-right:1px;position:relative;top:-1px">航法</span></div>
<div class="c h" style="left:0;top:360px;width:33px;height:20px;border-right:1px solid #a0a0a0;border-bottom:1px solid #a0a0a0;text-align:right;padding-right:3px">18</div>
<div class="c" style="left:33px;top:360px;width:170px;height:20px;border-bottom:1px solid #e6e6e6;border-right:1px solid #e6e6e6;padding-left:3px;"><span style="font-size:13px;letter-spacing:-1px;margin-right:1px;position:relative;top:-1px">栗林</span></div>
<div class="c h" style="left:0;top:380px;width:33px;height:20px;border-right:1px solid #a0a0a0;border-bottom:1px solid #a0a0a0;text-align:right;padding-right:3px">19</div>
<div class="c" style="left:33px;top:380px;width:170px;height:20px;border-bottom:1px solid #e6e6e6;border-right:1px solid #e6e6e6;padding-left:3px;"><span style="font-size:13px;letter-spacing:-1px;margin-right:1px;position:relative;top:-1px">霊足引</span><span style="display:inline-block;width:10.50px;position:relative;top:-1px;white-space:nowrap"><span style="display:inline-block;font-size:13px;letter-spacing:-1px;transform:scaleX(0.875);transform-origin:0 0">き</span></span></div>
<div class="c h" style="left:0;top:400px;width:33px;height:20px;border-right:1px solid #a0a0a0;border-bottom:1px solid #a0a0a0;text-align:right;padding-right:3px">20</div>
<div class="c" style="left:33px;top:400px;width:170px;height:20px;border-bottom:1px solid #e6e6e6;border-right:1px solid #e6e6e6;padding-left:3px;"><span style="display:inline-block;width:42.00px;position:relative;top:-1px;white-space:nowrap"><span style="display:inline-block;font-size:13px;letter-spacing:-1px;transform:scaleX(0.875);transform-origin:0 0">メディア</span></span></div>
<div style="position:absolute;left:0;top:403px;width:139px;height:17px;background:#f0f0f0"></div>
<svg width="17" height="17" style="position:absolute;left:0;top:403px"><path d="M9.5 4.5 L6 8.5 L9.5 12.5" fill="none" stroke="#606060" stroke-width="2"/></svg>
<div style="position:absolute;left:17px;top:404px;width:123px;height:15px;background:#cdcdcd"></div>
</div></div>
<div class="w" style="left:345px;top:79px;width:978px;height:60px"><div class="tb"><div class="tt" style="left:5px"><span style="font-size:13px;letter-spacing:-1px;margin-right:1px;position:relative;top:-1px">検索</span> [<span style="font-size:13px;letter-spacing:-1px;margin-right:1px;position:relative;top:-1px">ｔｈｅ２５１１１７＿質量制御再現公表１．５＿</span><span style="display:inline-block;width:24.30px;position:relative;top:-1px;white-space:nowrap"><span style="display:inline-block;font-size:13px;letter-spacing:-1px;transform:scaleX(0.675);transform-origin:0 0">ジェド</span></span><span style="font-size:13px;letter-spacing:-1px;margin-right:1px;position:relative;top:-1px">霊界</span><span style="display:inline-block;width:24.30px;position:relative;top:-1px;white-space:nowrap"><span style="display:inline-block;font-size:13px;letter-spacing:-1px;transform:scaleX(0.675);transform-origin:0 0">ラジオ</span></span><span style="font-size:13px;letter-spacing:-1px;margin-right:1px;position:relative;top:-1px">再現０．５５＿ＮＨＫ千葉持</span><span style="display:inline-block;width:8.10px;position:relative;top:-1px;white-space:nowrap"><span style="display:inline-block;font-size:13px;letter-spacing:-1px;transform:scaleX(0.675);transform-origin:0 0">ち</span></span><span style="font-size:13px;letter-spacing:-1px;margin-right:1px;position:relative;top:-1px">込</span><span style="display:inline-block;width:8.10px;position:relative;top:-1px;white-space:nowrap"><span style="display:inline-block;font-size:13px;letter-spacing:-1px;transform:scaleX(0.675);transform-origin:0 0">み</span></span><span style="font-size:13px;letter-spacing:-1px;margin-right:1px;position:relative;top:-1px">１．０</span>.sea]</div>
<div class="btn" style="left:871px;top:3px"><svg width="32" height="18" style="position:absolute;left:-1px;top:-1px"><rect x="10.5" y="8.5" width="11" height="4" rx="1.2" fill="#f2f2f2" stroke="#2b2f36" stroke-width="1"/></svg></div><div class="btn" style="left:905px;top:3px"><svg width="32" height="18" style="position:absolute;left:-1px;top:-1px"><rect x="10.5" y="4.5" width="11" height="8" rx="1" fill="#f2f2f2" stroke="#2b2f36"/><rect x="13.5" y="7.5" width="5" height="2" fill="#c8ccd2" stroke="#2b2f36"/></svg></div><div class="btn" style="left:939px;top:3px"><svg width="32" height="18" style="position:absolute;left:-1px;top:-1px"><path transform="translate(10,4)" d="M0.5 1 Q0.5 0.5 1 0.5 L4.3 0.5 L6 2.1 L7.7 0.5 L11 0.5 Q11.5 0.5 11.5 1 L8.6 4.5 L11.5 8 Q11.5 8.5 11 8.5 L7.7 8.5 L6 6.9 L4.3 8.5 L1 8.5 Q0.5 8.5 0.5 8 L3.4 4.5 Z" fill="#f4f4f4" stroke="#2b2f36" stroke-width="1" stroke-linejoin="round"/></svg></div>
</div></div>
<div class="w" style="left:345px;top:106px;width:1018px;height:535px;border-color:#1c1c1c;">
<div class="tb" style="background:linear-gradient(#99b3cf,#a9c2dd 45%,#bcd1e8);"><div class="tt" style="left:6px;color:#000;"><span style="font-size:13px;letter-spacing:-1px;margin-right:1px;position:relative;top:-1px">集約一覧</span></div><div class="btn" style="left:778px;top:3px;border:1px solid #3e4b5c;background:linear-gradient(#cbdcee,#bed2e8 45%,#9db9d6 50%,#b5cce4);box-shadow:inset 0 0 0 1px rgba(235,243,250,.8);"><svg width="32" height="18" style="position:absolute;left:-1px;top:-1px"><rect x="10.5" y="8.5" width="11" height="4" rx="1.2" fill="#f2f2f2" stroke="#2b2f36" stroke-width="1"/></svg></div><div class="btn" style="left:812px;top:3px;border:1px solid #8aa3bf;background:linear-gradient(#c2d5ea,#b8cde5 45%,#9fbbd8 50%,#b5cce4);box-shadow:inset 0 0 0 1px rgba(225,235,246,.6);"><svg width="32" height="18" style="position:absolute;left:-1px;top:-1px"><rect x="10.5" y="4.5" width="11" height="8" rx="1" fill="#f2f2f2" stroke="#2b2f36"/><rect x="13.5" y="7.5" width="5" height="2" fill="#c8ccd2" stroke="#2b2f36"/></svg></div><div class="btn" style="left:846px;top:3px;border:1px solid #3b1c1a;background:linear-gradient(#e9a594,#dc8a76 45%,#c23f26 50%,#cc5a3f);box-shadow:inset 0 0 0 1px rgba(255,220,210,.6);"><svg width="32" height="18" style="position:absolute;left:-1px;top:-1px"><path transform="translate(10,4)" d="M0.5 1 Q0.5 0.5 1 0.5 L4.3 0.5 L6 2.1 L7.7 0.5 L11 0.5 Q11.5 0.5 11.5 1 L8.6 4.5 L11.5 8 Q11.5 8.5 11 8.5 L7.7 8.5 L6 6.9 L4.3 8.5 L1 8.5 Q0.5 8.5 0.5 8 L3.4 4.5 Z" fill="#f4f4f4" stroke="#2b2f36" stroke-width="1" stroke-linejoin="round"/></svg></div></div>
<div class="body"></div></div>
<div class="grid" style="left:360px;top:171px;width:854px;height:430px"><div class="gin">
<div class="c h" style="left:0;top:0;width:33px;height:20px;border-right:1px solid #a0a0a0;border-bottom:1px solid #a0a0a0;border-top:1px solid #fff;border-left:1px solid #fff"></div>
<div class="c h" style="left:33px;top:0;width:120px;height:20px;border-right:1px solid #a0a0a0;border-bottom:1px solid #a0a0a0;border-top:1px solid #fff;padding-left:3px;line-height:15px"><span style="font-size:13px;letter-spacing:-1px;margin-right:1px;position:relative;top:-1px">日本語</span></div>
<div class="c h" style="left:153px;top:0;width:120px;height:20px;border-right:1px solid #a0a0a0;border-bottom:1px solid #a0a0a0;border-top:1px solid #fff;padding-left:3px;line-height:15px"><span style="font-size:13px;letter-spacing:-1px;margin-right:1px;position:relative;top:-1px">英語</span></div>
<div class="c h" style="left:273px;top:0;width:60px;height:20px;border-right:1px solid #a0a0a0;border-bottom:1px solid #a0a0a0;border-top:1px solid #fff;padding-left:3px;line-height:15px"><span style="font-size:13px;letter-spacing:-1px;margin-right:1px;position:relative;top:-1px">統計評価</span></div>
<div class="c h" style="left:333px;top:0;width:60px;height:20px;border-right:1px solid #a0a0a0;border-bottom:1px solid #a0a0a0;border-top:1px solid #fff;padding-left:3px;line-height:15px"><span style="font-size:13px;letter-spacing:-1px;margin-right:1px;position:relative;top:-1px">平均評価</span></div>
<div class="c h" style="left:393px;top:0;width:50px;height:20px;border-right:1px solid #a0a0a0;border-bottom:1px solid #a0a0a0;border-top:1px solid #fff;padding-left:3px;line-height:15px"><span style="font-size:13px;letter-spacing:-1px;margin-right:1px;position:relative;top:-1px">最小</span>EP</div>
<div class="c h" style="left:443px;top:0;width:60px;height:20px;border-right:1px solid #a0a0a0;border-bottom:1px solid #a0a0a0;border-top:1px solid #fff;padding-left:3px;line-height:15px"><span style="font-size:13px;letter-spacing:-1px;margin-right:1px;position:relative;top:-1px">合計</span>EP</div>
<div class="c h" style="left:503px;top:0;width:50px;height:20px;border-right:1px solid #a0a0a0;border-bottom:1px solid #a0a0a0;border-top:1px solid #fff;padding-left:3px;line-height:15px"><span style="font-size:13px;letter-spacing:-1px;margin-right:1px;position:relative;top:-1px">重要</span></div>
<div class="c h" style="left:553px;top:0;width:50px;height:20px;border-right:1px solid #a0a0a0;border-bottom:1px solid #a0a0a0;border-top:1px solid #fff;padding-left:3px;line-height:15px"><span style="font-size:13px;letter-spacing:-1px;margin-right:1px;position:relative;top:-1px">優先</span>1</div>
<div class="c h" style="left:603px;top:0;width:50px;height:20px;border-right:1px solid #a0a0a0;border-bottom:1px solid #a0a0a0;border-top:1px solid #fff;padding-left:3px;line-height:15px"><span style="font-size:13px;letter-spacing:-1px;margin-right:1px;position:relative;top:-1px">優先</span>2</div>
<div class="c h" style="left:653px;top:0;width:50px;height:20px;border-right:1px solid #a0a0a0;border-bottom:1px solid #a0a0a0;border-top:1px solid #fff;padding-left:3px;line-height:15px"><span style="font-size:13px;letter-spacing:-1px;margin-right:1px;position:relative;top:-1px">優先</span>3</div>
<div class="c h" style="left:703px;top:0;width:50px;height:20px;border-right:1px solid #a0a0a0;border-bottom:1px solid #a0a0a0;border-top:1px solid #fff;padding-left:3px;line-height:15px"><span style="font-size:13px;letter-spacing:-1px;margin-right:1px;position:relative;top:-1px">優先</span>4</div>
<div class="c h" style="left:753px;top:0;width:50px;height:20px;border-right:1px solid #a0a0a0;border-bottom:1px solid #a0a0a0;border-top:1px solid #fff;padding-left:3px;line-height:15px"><span style="font-size:13px;letter-spacing:-1px;margin-right:1px;position:relative;top:-1px">優先</span>5</div>
<div class="c h" style="left:803px;top:0;width:50px;height:20px;border-right:1px solid #a0a0a0;border-bottom:1px solid #a0a0a0;border-top:1px solid #fff;padding-left:3px;line-height:15px"><span style="font-size:13px;letter-spacing:-1px;margin-right:1px;position:relative;top:-1px">優先</span></div>
<div class="c h" style="left:0;top:20px;width:33px;height:20px;border-right:1px solid #a0a0a0;border-bottom:1px solid #a0a0a0;text-align:right;padding-right:3px">1</div>
<div class="c" style="left:33px;top:20px;width:120px;height:20px;border-bottom:1px solid #e6e6e6;background:#0078d7;color:#fff;border-right:1px solid #9fd0f5;border-bottom-color:#a8dcf8;padding-left:3px;"><span style="font-size:13px;letter-spacing:-1px;margin-right:1px;position:relative;top:-1px">西郷隆盛</span></div>
<div class="c" style="left:153px;top:20px;width:120px;height:20px;border-bottom:1px solid #e6e6e6;background:#0078d7;color:#fff;border-right:1px solid #9fd0f5;border-bottom-color:#a8dcf8;padding-left:3px;">tsigu</div>
<div class="c" style="left:273px;top:20px;width:60px;height:20px;border-bottom:1px solid #e6e6e6;background:#0078d7;color:#fff;border-right:1px solid #9fd0f5;border-bottom-color:#a8dcf8;text-align:right;padding-right:2px;">91.9</div>
<div class="c" style="left:333px;top:20px;width:60px;height:20px;border-bottom:1px solid #e6e6e6;background:#0078d7;color:#fff;border-right:1px solid #9fd0f5;border-bottom-color:#a8dcf8;text-align:right;padding-right:2px;">340.37</div>
<div class="c" style="left:393px;top:20px;width:50px;height:20px;border-bottom:1px solid #e6e6e6;background:#0078d7;color:#fff;border-right:1px solid #9fd0f5;border-bottom-color:#a8dcf8;text-align:right;padding-right:2px;">0.01</div>
<div class="c" style="left:443px;top:20px;width:60px;height:20px;border-bottom:1px solid #e6e6e6;background:#0078d7;color:#fff;border-right:1px solid #9fd0f5;border-bottom-color:#a8dcf8;text-align:right;padding-right:2px;">0.27</div>
<div class="c" style="left:503px;top:20px;width:50px;height:20px;border-bottom:1px solid #e6e6e6;background:#0078d7;color:#fff;border-right:1px solid #9fd0f5;border-bottom-color:#a8dcf8;text-align:right;padding-right:2px;">0</div>
<div class="c" style="left:553px;top:20px;width:50px;height:20px;border-bottom:1px solid #e6e6e6;background:#0078d7;color:#fff;border-right:1px solid #9fd0f5;border-bottom-color:#a8dcf8;text-align:right;padding-right:2px;">2</div>
<div class="c" style="left:603px;top:20px;width:50px;height:20px;border-bottom:1px solid #e6e6e6;background:#0078d7;color:#fff;border-right:1px solid #9fd0f5;border-bottom-color:#a8dcf8;text-align:right;padding-right:2px;">0</div>
<div class="c" style="left:653px;top:20px;width:50px;height:20px;border-bottom:1px solid #e6e6e6;background:#0078d7;color:#fff;border-right:1px solid #9fd0f5;border-bottom-color:#a8dcf8;text-align:right;padding-right:2px;">2</div>
<div class="c" style="left:703px;top:20px;width:50px;height:20px;border-bottom:1px solid #e6e6e6;background:#0078d7;color:#fff;border-right:1px solid #9fd0f5;border-bottom-color:#a8dcf8;text-align:right;padding-right:2px;">1</div>
<div class="c" style="left:753px;top:20px;width:50px;height:20px;border-bottom:1px solid #e6e6e6;background:#0078d7;color:#fff;border-right:1px solid #9fd0f5;border-bottom-color:#a8dcf8;text-align:right;padding-right:2px;">1</div>
<div class="c" style="left:803px;top:20px;width:50px;height:20px;border-bottom:1px solid #e6e6e6;background:#0078d7;color:#fff;border-right:1px solid #9fd0f5;border-bottom-color:#a8dcf8;text-align:right;padding-right:2px;"></div>
<div class="c h" style="left:0;top:40px;width:33px;height:20px;border-right:1px solid #a0a0a0;border-bottom:1px solid #a0a0a0;text-align:right;padding-right:3px">2</div>
<div class="c" style="left:33px;top:40px;width:120px;height:20px;border-bottom:1px solid #e6e6e6;border-right:1px solid #e6e6e6;padding-left:3px;"><span style="display:inline-block;width:52.50px;position:relative;top:-1px;white-space:nowrap"><span style="display:inline-block;font-size:13px;letter-spacing:-1px;transform:scaleX(0.875);transform-origin:0 0">テレパシー</span></span></div>
<div class="c" style="left:153px;top:40px;width:120px;height:20px;border-bottom:1px solid #e6e6e6;border-right:1px solid #e6e6e6;padding-left:3px;">tlpth</div>
<div class="c" style="left:273px;top:40px;width:60px;height:20px;border-bottom:1px solid #e6e6e6;border-right:1px solid #e6e6e6;text-align:right;padding-right:2px;">43.09</div>
<div class="c" style="left:333px;top:40px;width:60px;height:20px;border-bottom:1px solid #e6e6e6;border-right:1px solid #e6e6e6;text-align:right;padding-right:2px;">253.47</div>
<div class="c" style="left:393px;top:40px;width:50px;height:20px;border-bottom:1px solid #e6e6e6;border-right:1px solid #e6e6e6;text-align:right;padding-right:2px;">0.04</div>
<div class="c" style="left:443px;top:40px;width:60px;height:20px;border-bottom:1px solid #e6e6e6;border-right:1px solid #e6e6e6;text-align:right;padding-right:2px;">0.17</div>
<div class="c" style="left:503px;top:40px;width:50px;height:20px;border-bottom:1px solid #e6e6e6;border-right:1px solid #e6e6e6;text-align:right;padding-right:2px;">0</div>
<div class="c" style="left:553px;top:40px;width:50px;height:20px;border-bottom:1px solid #e6e6e6;border-right:1px solid #e6e6e6;text-align:right;padding-right:2px;">2</div>
<div class="c" style="left:603px;top:40px;width:50px;height:20px;border-bottom:1px solid #e6e6e6;border-right:1px solid #e6e6e6;text-align:right;padding-right:2px;">0</div>
<div class="c" style="left:653px;top:40px;width:50px;height:20px;border-bottom:1px solid #e6e6e6;border-right:1px solid #e6e6e6;text-align:right;padding-right:2px;">0</div>
<div class="c" style="left:703px;top:40px;width:50px;height:20px;border-bottom:1px solid #e6e6e6;border-right:1px solid #e6e6e6;text-align:right;padding-right:2px;">0</div>
<div class="c" style="left:753px;top:40px;width:50px;height:20px;border-bottom:1px solid #e6e6e6;border-right:1px solid #e6e6e6;text-align:right;padding-right:2px;">0</div>
<div class="c" style="left:803px;top:40px;width:50px;height:20px;border-bottom:1px solid #e6e6e6;border-right:1px solid #e6e6e6;text-align:right;padding-right:2px;"></div>
<div class="c h" style="left:0;top:60px;width:33px;height:20px;border-right:1px solid #a0a0a0;border-bottom:1px solid #a0a0a0;text-align:right;padding-right:3px">3</div>
<div class="c" style="left:33px;top:60px;width:120px;height:20px;border-bottom:1px solid #e6e6e6;border-right:1px solid #e6e6e6;padding-left:3px;">the<span style="display:inline-block;width:42.00px;position:relative;top:-1px;white-space:nowrap"><span style="display:inline-block;font-size:13px;letter-spacing:-1px;transform:scaleX(0.875);transform-origin:0 0">おざいち</span></span></div>
<div class="c" style="left:153px;top:60px;width:120px;height:20px;border-bottom:1px solid #e6e6e6;border-right:1px solid #e6e6e6;padding-left:3px;">hozit</div>
<div class="c" style="left:273px;top:60px;width:60px;height:20px;border-bottom:1px solid #e6e6e6;border-right:1px solid #e6e6e6;text-align:right;padding-right:2px;">47.61</div>
<div class="c" style="left:333px;top:60px;width:60px;height:20px;border-bottom:1px solid #e6e6e6;border-right:1px solid #e6e6e6;text-align:right;padding-right:2px;">476.099</div>
<div class="c" style="left:393px;top:60px;width:50px;height:20px;border-bottom:1px solid #e6e6e6;border-right:1px solid #e6e6e6;text-align:right;padding-right:2px;">0.03</div>
<div class="c" style="left:443px;top:60px;width:60px;height:20px;border-bottom:1px solid #e6e6e6;border-right:1px solid #e6e6e6;text-align:right;padding-right:2px;">0.1</div>
<div class="c" style="left:503px;top:60px;width:50px;height:20px;border-bottom:1px solid #e6e6e6;border-right:1px solid #e6e6e6;text-align:right;padding-right:2px;">0</div>
<div class="c" style="left:553px;top:60px;width:50px;height:20px;border-bottom:1px solid #e6e6e6;border-right:1px solid #e6e6e6;text-align:right;padding-right:2px;">2</div>
<div class="c" style="left:603px;top:60px;width:50px;height:20px;border-bottom:1px solid #e6e6e6;border-right:1px solid #e6e6e6;text-align:right;padding-right:2px;">0</div>
<div class="c" style="left:653px;top:60px;width:50px;height:20px;border-bottom:1px solid #e6e6e6;border-right:1px solid #e6e6e6;text-align:right;padding-right:2px;">0</div>
<div class="c" style="left:703px;top:60px;width:50px;height:20px;border-bottom:1px solid #e6e6e6;border-right:1px solid #e6e6e6;text-align:right;padding-right:2px;">0</div>
<div class="c" style="left:753px;top:60px;width:50px;height:20px;border-bottom:1px solid #e6e6e6;border-right:1px solid #e6e6e6;text-align:right;padding-right:2px;">0</div>
<div class="c" style="left:803px;top:60px;width:50px;height:20px;border-bottom:1px solid #e6e6e6;border-right:1px solid #e6e6e6;text-align:right;padding-right:2px;"></div>
<div class="c h" style="left:0;top:80px;width:33px;height:20px;border-right:1px solid #a0a0a0;border-bottom:1px solid #a0a0a0;text-align:right;padding-right:3px">4</div>
<div class="c" style="left:33px;top:80px;width:120px;height:20px;border-bottom:1px solid #e6e6e6;border-right:1px solid #e6e6e6;padding-left:3px;"><span style="display:inline-block;width:31.50px;position:relative;top:-1px;white-space:nowrap"><span style="display:inline-block;font-size:13px;letter-spacing:-1px;transform:scaleX(0.875);transform-origin:0 0">ミロク</span></span><span style="font-size:13px;letter-spacing:-1px;margin-right:1px;position:relative;top:-1px">悪</span></div>
<div class="c" style="left:153px;top:80px;width:120px;height:20px;border-bottom:1px solid #e6e6e6;border-right:1px solid #e6e6e6;padding-left:3px;">akmrk</div>
<div class="c" style="left:273px;top:80px;width:60px;height:20px;border-bottom:1px solid #e6e6e6;border-right:1px solid #e6e6e6;text-align:right;padding-right:2px;">125.4</div>
<div class="c" style="left:333px;top:80px;width:60px;height:20px;border-bottom:1px solid #e6e6e6;border-right:1px solid #e6e6e6;text-align:right;padding-right:2px;">447.857</div>
<div class="c" style="left:393px;top:80px;width:50px;height:20px;border-bottom:1px solid #e6e6e6;border-right:1px solid #e6e6e6;text-align:right;padding-right:2px;">0.01</div>
<div class="c" style="left:443px;top:80px;width:60px;height:20px;border-bottom:1px solid #e6e6e6;border-right:1px solid #e6e6e6;text-align:right;padding-right:2px;">0.28</div>
<div class="c" style="left:503px;top:80px;width:50px;height:20px;border-bottom:1px solid #e6e6e6;border-right:1px solid #e6e6e6;text-align:right;padding-right:2px;">0</div>
<div class="c" style="left:553px;top:80px;width:50px;height:20px;border-bottom:1px solid #e6e6e6;border-right:1px solid #e6e6e6;text-align:right;padding-right:2px;">1</div>
<div class="c" style="left:603px;top:80px;width:50px;height:20px;border-bottom:1px solid #e6e6e6;border-right:1px solid #e6e6e6;text-align:right;padding-right:2px;">4</div>
<div class="c" style="left:653px;top:80px;width:50px;height:20px;border-bottom:1px solid #e6e6e6;border-right:1px solid #e6e6e6;text-align:right;padding-right:2px;">3</div>
<div class="c" style="left:703px;top:80px;width:50px;height:20px;border-bottom:1px solid #e6e6e6;border-right:1px solid #e6e6e6;text-align:right;padding-right:2px;">0</div>
<div class="c" style="left:753px;top:80px;width:50px;height:20px;border-bottom:1px solid #e6e6e6;border-right:1px solid #e6e6e6;text-align:right;padding-right:2px;">0</div>
<div class="c" style="left:803px;top:80px;width:50px;height:20px;border-bottom:1px solid #e6e6e6;border-right:1px solid #e6e6e6;text-align:right;padding-right:2px;"></div>
<div class="c h" style="left:0;top:100px;width:33px;height:20px;border-right:1px solid #a0a0a0;border-bottom:1px solid #a0a0a0;text-align:right;padding-right:3px">5</div>
<div class="c" style="left:33px;top:100px;width:120px;height:20px;border-bottom:1px solid #e6e6e6;border-right:1px solid #e6e6e6;padding-left:3px;"><span style="font-size:13px;letter-spacing:-1px;margin-right:1px;position:relative;top:-1px">低周波</span></div>
<div class="c" style="left:153px;top:100px;width:120px;height:20px;border-bottom:1px solid #e6e6e6;border-right:1px solid #e6e6e6;padding-left:3px;">tisyh</div>
<div class="c" style="left:273px;top:100px;width:60px;height:20px;border-bottom:1px solid #e6e6e6;border-right:1px solid #e6e6e6;text-align:right;padding-right:2px;">137.55</div>
<div class="c" style="left:333px;top:100px;width:60px;height:20px;border-bottom:1px solid #e6e6e6;border-right:1px solid #e6e6e6;text-align:right;padding-right:2px;">655</div>
<div class="c" style="left:393px;top:100px;width:50px;height:20px;border-bottom:1px solid #e6e6e6;border-right:1px solid #e6e6e6;text-align:right;padding-right:2px;">0.01</div>
<div class="c" style="left:443px;top:100px;width:60px;height:20px;border-bottom:1px solid #e6e6e6;border-right:1px solid #e6e6e6;text-align:right;padding-right:2px;">0.21</div>
<div class="c" style="left:503px;top:100px;width:50px;height:20px;border-bottom:1px solid #e6e6e6;border-right:1px solid #e6e6e6;text-align:right;padding-right:2px;">0</div>
<div class="c" style="left:553px;top:100px;width:50px;height:20px;border-bottom:1px solid #e6e6e6;border-right:1px solid #e6e6e6;text-align:right;padding-right:2px;">1</div>
<div class="c" style="left:603px;top:100px;width:50px;height:20px;border-bottom:1px solid #e6e6e6;border-right:1px solid #e6e6e6;text-align:right;padding-right:2px;">2</div>
<div class="c" style="left:653px;top:100px;width:50px;height:20px;border-bottom:1px solid #e6e6e6;border-right:1px solid #e6e6e6;text-align:right;padding-right:2px;">1</div>
<div class="c" style="left:703px;top:100px;width:50px;height:20px;border-bottom:1px solid #e6e6e6;border-right:1px solid #e6e6e6;text-align:right;padding-right:2px;">1</div>
<div class="c" style="left:753px;top:100px;width:50px;height:20px;border-bottom:1px solid #e6e6e6;border-right:1px solid #e6e6e6;text-align:right;padding-right:2px;">0</div>
<div class="c" style="left:803px;top:100px;width:50px;height:20px;border-bottom:1px solid #e6e6e6;border-right:1px solid #e6e6e6;text-align:right;padding-right:2px;"></div>
<div class="c h" style="left:0;top:120px;width:33px;height:20px;border-right:1px solid #a0a0a0;border-bottom:1px solid #a0a0a0;text-align:right;padding-right:3px">6</div>
<div class="c" style="left:33px;top:120px;width:120px;height:20px;border-bottom:1px solid #e6e6e6;border-right:1px solid #e6e6e6;padding-left:3px;">N<span style="font-size:13px;letter-spacing:-1px;margin-right:1px;position:relative;top:-1px">持</span><span style="display:inline-block;width:10.50px;position:relative;top:-1px;white-space:nowrap"><span style="display:inline-block;font-size:13px;letter-spacing:-1px;transform:scaleX(0.875);transform-origin:0 0">ち</span></span><span style="font-size:13px;letter-spacing:-1px;margin-right:1px;position:relative;top:-1px">込</span><span style="display:inline-block;width:10.50px;position:relative;top:-1px;white-space:nowrap"><span style="display:inline-block;font-size:13px;letter-spacing:-1px;transform:scaleX(0.875);transform-origin:0 0">み</span></span></div>
<div class="c" style="left:153px;top:120px;width:120px;height:20px;border-bottom:1px solid #e6e6e6;border-right:1px solid #e6e6e6;padding-left:3px;">mtkmN</div>
<div class="c" style="left:273px;top:120px;width:60px;height:20px;border-bottom:1px solid #e6e6e6;border-right:1px solid #e6e6e6;text-align:right;padding-right:2px;">146.94</div>
<div class="c" style="left:333px;top:120px;width:60px;height:20px;border-bottom:1px solid #e6e6e6;border-right:1px solid #e6e6e6;text-align:right;padding-right:2px;">1335.818</div>
<div class="c" style="left:393px;top:120px;width:50px;height:20px;border-bottom:1px solid #e6e6e6;border-right:1px solid #e6e6e6;text-align:right;padding-right:2px;">0.01</div>
<div class="c" style="left:443px;top:120px;width:60px;height:20px;border-bottom:1px solid #e6e6e6;border-right:1px solid #e6e6e6;text-align:right;padding-right:2px;">0.11</div>
<div class="c" style="left:503px;top:120px;width:50px;height:20px;border-bottom:1px solid #e6e6e6;border-right:1px solid #e6e6e6;text-align:right;padding-right:2px;">0</div>
<div class="c" style="left:553px;top:120px;width:50px;height:20px;border-bottom:1px solid #e6e6e6;border-right:1px solid #e6e6e6;text-align:right;padding-right:2px;">1</div>
<div class="c" style="left:603px;top:120px;width:50px;height:20px;border-bottom:1px solid #e6e6e6;border-right:1px solid #e6e6e6;text-align:right;padding-right:2px;">2</div>
<div class="c" style="left:653px;top:120px;width:50px;height:20px;border-bottom:1px solid #e6e6e6;border-right:1px solid #e6e6e6;text-align:right;padding-right:2px;">1</div>
<div class="c" style="left:703px;top:120px;width:50px;height:20px;border-bottom:1px solid #e6e6e6;border-right:1px solid #e6e6e6;text-align:right;padding-right:2px;">0</div>
<div class="c" style="left:753px;top:120px;width:50px;height:20px;border-bottom:1px solid #e6e6e6;border-right:1px solid #e6e6e6;text-align:right;padding-right:2px;">0</div>
<div class="c" style="left:803px;top:120px;width:50px;height:20px;border-bottom:1px solid #e6e6e6;border-right:1px solid #e6e6e6;text-align:right;padding-right:2px;"></div>
<div class="c h" style="left:0;top:140px;width:33px;height:20px;border-right:1px solid #a0a0a0;border-bottom:1px solid #a0a0a0;text-align:right;padding-right:3px">7</div>
<div class="c" style="left:33px;top:140px;width:120px;height:20px;border-bottom:1px solid #e6e6e6;border-right:1px solid #e6e6e6;padding-left:3px;"><span style="font-size:13px;letter-spacing:-1px;margin-right:1px;position:relative;top:-1px">明治行</span><span style="display:inline-block;width:10.50px;position:relative;top:-1px;white-space:nowrap"><span style="display:inline-block;font-size:13px;letter-spacing:-1px;transform:scaleX(0.875);transform-origin:0 0">き</span></span></div>
<div class="c" style="left:153px;top:140px;width:120px;height:20px;border-bottom:1px solid #e6e6e6;border-right:1px solid #e6e6e6;padding-left:3px;">ykmij</div>
<div class="c" style="left:273px;top:140px;width:60px;height:20px;border-bottom:1px solid #e6e6e6;border-right:1px solid #e6e6e6;text-align:right;padding-right:2px;">115.74</div>
<div class="c" style="left:333px;top:140px;width:60px;height:20px;border-bottom:1px solid #e6e6e6;border-right:1px solid #e6e6e6;text-align:right;padding-right:2px;">1052.181</div>
<div class="c" style="left:393px;top:140px;width:50px;height:20px;border-bottom:1px solid #e6e6e6;border-right:1px solid #e6e6e6;text-align:right;padding-right:2px;">0.01</div>
<div class="c" style="left:443px;top:140px;width:60px;height:20px;border-bottom:1px solid #e6e6e6;border-right:1px solid #e6e6e6;text-align:right;padding-right:2px;">0.11</div>
<div class="c" style="left:503px;top:140px;width:50px;height:20px;border-bottom:1px solid #e6e6e6;border-right:1px solid #e6e6e6;text-align:right;padding-right:2px;">0</div>
<div class="c" style="left:553px;top:140px;width:50px;height:20px;border-bottom:1px solid #e6e6e6;border-right:1px solid #e6e6e6;text-align:right;padding-right:2px;">1</div>
<div class="c" style="left:603px;top:140px;width:50px;height:20px;border-bottom:1px solid #e6e6e6;border-right:1px solid #e6e6e6;text-align:right;padding-right:2px;">1</div>
<div class="c" style="left:653px;top:140px;width:50px;height:20px;border-bottom:1px solid #e6e6e6;border-right:1px solid #e6e6e6;text-align:right;padding-right:2px;">2</div>
<div class="c" style="left:703px;top:140px;width:50px;height:20px;border-bottom:1px solid #e6e6e6;border-right:1px solid #e6e6e6;text-align:right;padding-right:2px;">0</div>
<div class="c" style="left:753px;top:140px;width:50px;height:20px;border-bottom:1px solid #e6e6e6;border-right:1px solid #e6e6e6;text-align:right;padding-right:2px;">0</div>
<div class="c" style="left:803px;top:140px;width:50px;height:20px;border-bottom:1px solid #e6e6e6;border-right:1px solid #e6e6e6;text-align:right;padding-right:2px;"></div>
<div class="c h" style="left:0;top:160px;width:33px;height:20px;border-right:1px solid #a0a0a0;border-bottom:1px solid #a0a0a0;text-align:right;padding-right:3px">8</div>
<div class="c" style="left:33px;top:160px;width:120px;height:20px;border-bottom:1px solid #e6e6e6;border-right:1px solid #e6e6e6;padding-left:3px;"><span style="font-size:13px;letter-spacing:-1px;margin-right:1px;position:relative;top:-1px">誕生</span></div>
<div class="c" style="left:153px;top:160px;width:120px;height:20px;border-bottom:1px solid #e6e6e6;border-right:1px solid #e6e6e6;padding-left:3px;">tnjyu</div>
<div class="c" style="left:273px;top:160px;width:60px;height:20px;border-bottom:1px solid #e6e6e6;border-right:1px solid #e6e6e6;text-align:right;padding-right:2px;">29.25</div>
<div class="c" style="left:333px;top:160px;width:60px;height:20px;border-bottom:1px solid #e6e6e6;border-right:1px solid #e6e6e6;text-align:right;padding-right:2px;">325</div>
<div class="c" style="left:393px;top:160px;width:50px;height:20px;border-bottom:1px solid #e6e6e6;border-right:1px solid #e6e6e6;text-align:right;padding-right:2px;">0.04</div>
<div class="c" style="left:443px;top:160px;width:60px;height:20px;border-bottom:1px solid #e6e6e6;border-right:1px solid #e6e6e6;text-align:right;padding-right:2px;">0.09</div>
<div class="c" style="left:503px;top:160px;width:50px;height:20px;border-bottom:1px solid #e6e6e6;border-right:1px solid #e6e6e6;text-align:right;padding-right:2px;">0</div>
<div class="c" style="left:553px;top:160px;width:50px;height:20px;border-bottom:1px solid #e6e6e6;border-right:1px solid #e6e6e6;text-align:right;padding-right:2px;">1</div>
<div class="c" style="left:603px;top:160px;width:50px;height:20px;border-bottom:1px solid #e6e6e6;border-right:1px solid #e6e6e6;text-align:right;padding-right:2px;">1</div>
<div class="c" style="left:653px;top:160px;width:50px;height:20px;border-bottom:1px solid #e6e6e6;border-right:1px solid #e6e6e6;text-align:right;padding-right:2px;">0</div>
<div class="c" style="left:703px;top:160px;width:50px;height:20px;border-bottom:1px solid #e6e6e6;border-right:1px solid #e6e6e6;text-align:right;padding-right:2px;">0</div>
<div class="c" style="left:753px;top:160px;width:50px;height:20px;border-bottom:1px solid #e6e6e6;border-right:1px solid #e6e6e6;text-align:right;padding-right:2px;">0</div>
<div class="c" style="left:803px;top:160px;width:50px;height:20px;border-bottom:1px solid #e6e6e6;border-right:1px solid #e6e6e6;text-align:right;padding-right:2px;"></div>
<div class="c h" style="left:0;top:180px;width:33px;height:20px;border-right:1px solid #a0a0a0;border-bottom:1px solid #a0a0a0;text-align:right;padding-right:3px">9</div>
<div class="c" style="left:33px;top:180px;width:120px;height:20px;border-bottom:1px solid #e6e6e6;border-right:1px solid #e6e6e6;padding-left:3px;"><span style="font-size:13px;letter-spacing:-1px;margin-right:1px;position:relative;top:-1px">松果体</span></div>
<div class="c" style="left:153px;top:180px;width:120px;height:20px;border-bottom:1px solid #e6e6e6;border-right:1px solid #e6e6e6;padding-left:3px;">sykti</div>
<div class="c" style="left:273px;top:180px;width:60px;height:20px;border-bottom:1px solid #e6e6e6;border-right:1px solid #e6e6e6;text-align:right;padding-right:2px;">55</div>
<div class="c" style="left:333px;top:180px;width:60px;height:20px;border-bottom:1px solid #e6e6e6;border-right:1px solid #e6e6e6;text-align:right;padding-right:2px;">1375</div>
<div class="c" style="left:393px;top:180px;width:50px;height:20px;border-bottom:1px solid #e6e6e6;border-right:1px solid #e6e6e6;text-align:right;padding-right:2px;">0.02</div>
<div class="c" style="left:443px;top:180px;width:60px;height:20px;border-bottom:1px solid #e6e6e6;border-right:1px solid #e6e6e6;text-align:right;padding-right:2px;">0.04</div>
<div class="c" style="left:503px;top:180px;width:50px;height:20px;border-bottom:1px solid #e6e6e6;border-right:1px solid #e6e6e6;text-align:right;padding-right:2px;">0</div>
<div class="c" style="left:553px;top:180px;width:50px;height:20px;border-bottom:1px solid #e6e6e6;border-right:1px solid #e6e6e6;text-align:right;padding-right:2px;">1</div>
<div class="c" style="left:603px;top:180px;width:50px;height:20px;border-bottom:1px solid #e6e6e6;border-right:1px solid #e6e6e6;text-align:right;padding-right:2px;">0</div>
<div class="c" style="left:653px;top:180px;width:50px;height:20px;border-bottom:1px solid #e6e6e6;border-right:1px solid #e6e6e6;text-align:right;padding-right:2px;">1</div>
<div class="c" style="left:703px;top:180px;width:50px;height:20px;border-bottom:1px solid #e6e6e6;border-right:1px solid #e6e6e6;text-align:right;padding-right:2px;">0</div>
<div class="c" style="left:753px;top:180px;width:50px;height:20px;border-bottom:1px solid #e6e6e6;border-right:1px solid #e6e6e6;text-align:right;padding-right:2px;">0</div>
<div class="c" style="left:803px;top:180px;width:50px;height:20px;border-bottom:1px solid #e6e6e6;border-right:1px solid #e6e6e6;text-align:right;padding-right:2px;"></div>
<div class="c h" style="left:0;top:200px;width:33px;height:20px;border-right:1px solid #a0a0a0;border-bottom:1px solid #a0a0a0;text-align:right;padding-right:3px">10</div>
<div class="c" style="left:33px;top:200px;width:120px;height:20px;border-bottom:1px solid #e6e6e6;border-right:1px solid #e6e6e6;padding-left:3px;"><span style="font-size:13px;letter-spacing:-1px;margin-right:1px;position:relative;top:-1px">動画記事</span></div>
<div class="c" style="left:153px;top:200px;width:120px;height:20px;border-bottom:1px solid #e6e6e6;border-right:1px solid #e6e6e6;padding-left:3px;">dugkj</div>
<div class="c" style="left:273px;top:200px;width:60px;height:20px;border-bottom:1px solid #e6e6e6;border-right:1px solid #e6e6e6;text-align:right;padding-right:2px;">50</div>
<div class="c" style="left:333px;top:200px;width:60px;height:20px;border-bottom:1px solid #e6e6e6;border-right:1px solid #e6e6e6;text-align:right;padding-right:2px;">2500</div>
<div class="c" style="left:393px;top:200px;width:50px;height:20px;border-bottom:1px solid #e6e6e6;border-right:1px solid #e6e6e6;text-align:right;padding-right:2px;">0.02</div>
<div class="c" style="left:443px;top:200px;width:60px;height:20px;border-bottom:1px solid #e6e6e6;border-right:1px solid #e6e6e6;text-align:right;padding-right:2px;">0.02</div>
<div class="c" style="left:503px;top:200px;width:50px;height:20px;border-bottom:1px solid #e6e6e6;border-right:1px solid #e6e6e6;text-align:right;padding-right:2px;">0</div>
<div class="c" style="left:553px;top:200px;width:50px;height:20px;border-bottom:1px solid #e6e6e6;border-right:1px solid #e6e6e6;text-align:right;padding-right:2px;">1</div>
<div class="c" style="left:603px;top:200px;width:50px;height:20px;border-bottom:1px solid #e6e6e6;border-right:1px solid #e6e6e6;text-align:right;padding-right:2px;">0</div>
<div class="c" style="left:653px;top:200px;width:50px;height:20px;border-bottom:1px solid #e6e6e6;border-right:1px solid #e6e6e6;text-align:right;padding-right:2px;">0</div>
<div class="c" style="left:703px;top:200px;width:50px;height:20px;border-bottom:1px solid #e6e6e6;border-right:1px solid #e6e6e6;text-align:right;padding-right:2px;">0</div>
<div class="c" style="left:753px;top:200px;width:50px;height:20px;border-bottom:1px solid #e6e6e6;border-right:1px solid #e6e6e6;text-align:right;padding-right:2px;">0</div>
<div class="c" style="left:803px;top:200px;width:50px;height:20px;border-bottom:1px solid #e6e6e6;border-right:1px solid #e6e6e6;text-align:right;padding-right:2px;"></div>
<div class="c h" style="left:0;top:220px;width:33px;height:20px;border-right:1px solid #a0a0a0;border-bottom:1px solid #a0a0a0;text-align:right;padding-right:3px">11</div>
<div class="c" style="left:33px;top:220px;width:120px;height:20px;border-bottom:1px solid #e6e6e6;border-right:1px solid #e6e6e6;padding-left:3px;"><span style="font-size:13px;letter-spacing:-1px;margin-right:1px;position:relative;top:-1px">暗号事例</span></div>
<div class="c" style="left:153px;top:220px;width:120px;height:20px;border-bottom:1px solid #e6e6e6;border-right:1px solid #e6e6e6;padding-left:3px;">jriang</div>
<div class="c" style="left:273px;top:220px;width:60px;height:20px;border-bottom:1px solid #e6e6e6;border-right:1px solid #e6e6e6;text-align:right;padding-right:2px;">50</div>
<div class="c" style="left:333px;top:220px;width:60px;height:20px;border-bottom:1px solid #e6e6e6;border-right:1px solid #e6e6e6;text-align:right;padding-right:2px;">2500</div>
<div class="c" style="left:393px;top:220px;width:50px;height:20px;border-bottom:1px solid #e6e6e6;border-right:1px solid #e6e6e6;text-align:right;padding-right:2px;">0.02</div>
<div class="c" style="left:443px;top:220px;width:60px;height:20px;border-bottom:1px solid #e6e6e6;border-right:1px solid #e6e6e6;text-align:right;padding-right:2px;">0.02</div>
<div class="c" style="left:503px;top:220px;width:50px;height:20px;border-bottom:1px solid #e6e6e6;border-right:1px solid #e6e6e6;text-align:right;padding-right:2px;">0</div>
<div class="c" style="left:553px;top:220px;width:50px;height:20px;border-bottom:1px solid #e6e6e6;border-right:1px solid #e6e6e6;text-align:right;padding-right:2px;">1</div>
<div class="c" style="left:603px;top:220px;width:50px;height:20px;border-bottom:1px solid #e6e6e6;border-right:1px solid #e6e6e6;text-align:right;padding-right:2px;">0</div>
<div class="c" style="left:653px;top:220px;width:50px;height:20px;border-bottom:1px solid #e6e6e6;border-right:1px solid #e6e6e6;text-align:right;padding-right:2px;">0</div>
<div class="c" style="left:703px;top:220px;width:50px;height:20px;border-bottom:1px solid #e6e6e6;border-right:1px solid #e6e6e6;text-align:right;padding-right:2px;">0</div>
<div class="c" style="left:753px;top:220px;width:50px;height:20px;border-bottom:1px solid #e6e6e6;border-right:1px solid #e6e6e6;text-align:right;padding-right:2px;">0</div>
<div class="c" style="left:803px;top:220px;width:50px;height:20px;border-bottom:1px solid #e6e6e6;border-right:1px solid #e6e6e6;text-align:right;padding-right:2px;"></div>
<div class="c h" style="left:0;top:240px;width:33px;height:20px;border-right:1px solid #a0a0a0;border-bottom:1px solid #a0a0a0;text-align:right;padding-right:3px">12</div>
<div class="c" style="left:33px;top:240px;width:120px;height:20px;border-bottom:1px solid #e6e6e6;border-right:1px solid #e6e6e6;padding-left:3px;">the<span style="font-size:13px;letter-spacing:-1px;margin-right:1px;position:relative;top:-1px">関税</span></div>
<div class="c" style="left:153px;top:240px;width:120px;height:20px;border-bottom:1px solid #e6e6e6;border-right:1px solid #e6e6e6;padding-left:3px;">knzih</div>
<div class="c" style="left:273px;top:240px;width:60px;height:20px;border-bottom:1px solid #e6e6e6;border-right:1px solid #e6e6e6;text-align:right;padding-right:2px;">33.33</div>
<div class="c" style="left:333px;top:240px;width:60px;height:20px;border-bottom:1px solid #e6e6e6;border-right:1px solid #e6e6e6;text-align:right;padding-right:2px;">1111</div>
<div class="c" style="left:393px;top:240px;width:50px;height:20px;border-bottom:1px solid #e6e6e6;border-right:1px solid #e6e6e6;text-align:right;padding-right:2px;">0.03</div>
<div class="c" style="left:443px;top:240px;width:60px;height:20px;border-bottom:1px solid #e6e6e6;border-right:1px solid #e6e6e6;text-align:right;padding-right:2px;">0.03</div>
<div class="c" style="left:503px;top:240px;width:50px;height:20px;border-bottom:1px solid #e6e6e6;border-right:1px solid #e6e6e6;text-align:right;padding-right:2px;">0</div>
<div class="c" style="left:553px;top:240px;width:50px;height:20px;border-bottom:1px solid #e6e6e6;border-right:1px solid #e6e6e6;text-align:right;padding-right:2px;">1</div>
<div class="c" style="left:603px;top:240px;width:50px;height:20px;border-bottom:1px solid #e6e6e6;border-right:1px solid #e6e6e6;text-align:right;padding-right:2px;">0</div>
<div class="c" style="left:653px;top:240px;width:50px;height:20px;border-bottom:1px solid #e6e6e6;border-right:1px solid #e6e6e6;text-align:right;padding-right:2px;">0</div>
<div class="c" style="left:703px;top:240px;width:50px;height:20px;border-bottom:1px solid #e6e6e6;border-right:1px solid #e6e6e6;text-align:right;padding-right:2px;">0</div>
<div class="c" style="left:753px;top:240px;width:50px;height:20px;border-bottom:1px solid #e6e6e6;border-right:1px solid #e6e6e6;text-align:right;padding-right:2px;">0</div>
<div class="c" style="left:803px;top:240px;width:50px;height:20px;border-bottom:1px solid #e6e6e6;border-right:1px solid #e6e6e6;text-align:right;padding-right:2px;"></div>
<div class="c h" style="left:0;top:260px;width:33px;height:20px;border-right:1px solid #a0a0a0;border-bottom:1px solid #a0a0a0;text-align:right;padding-right:3px">13</div>
<div class="c" style="left:33px;top:260px;width:120px;height:20px;border-bottom:1px solid #e6e6e6;border-right:1px solid #e6e6e6;padding-left:3px;"><span style="display:inline-block;width:31.50px;position:relative;top:-1px;white-space:nowrap"><span style="display:inline-block;font-size:13px;letter-spacing:-1px;transform:scaleX(0.875);transform-origin:0 0">らせん</span></span></div>
<div class="c" style="left:153px;top:260px;width:120px;height:20px;border-bottom:1px solid #e6e6e6;border-right:1px solid #e6e6e6;padding-left:3px;">spirl</div>
<div class="c" style="left:273px;top:260px;width:60px;height:20px;border-bottom:1px solid #e6e6e6;border-right:1px solid #e6e6e6;text-align:right;padding-right:2px;">14.28</div>
<div class="c" style="left:333px;top:260px;width:60px;height:20px;border-bottom:1px solid #e6e6e6;border-right:1px solid #e6e6e6;text-align:right;padding-right:2px;">203.999</div>
<div class="c" style="left:393px;top:260px;width:50px;height:20px;border-bottom:1px solid #e6e6e6;border-right:1px solid #e6e6e6;text-align:right;padding-right:2px;">0.07</div>
<div class="c" style="left:443px;top:260px;width:60px;height:20px;border-bottom:1px solid #e6e6e6;border-right:1px solid #e6e6e6;text-align:right;padding-right:2px;">0.07</div>
<div class="c" style="left:503px;top:260px;width:50px;height:20px;border-bottom:1px solid #e6e6e6;border-right:1px solid #e6e6e6;text-align:right;padding-right:2px;">0</div>
<div class="c" style="left:553px;top:260px;width:50px;height:20px;border-bottom:1px solid #e6e6e6;border-right:1px solid #e6e6e6;text-align:right;padding-right:2px;">1</div>
<div class="c" style="left:603px;top:260px;width:50px;height:20px;border-bottom:1px solid #e6e6e6;border-right:1px solid #e6e6e6;text-align:right;padding-right:2px;">0</div>
<div class="c" style="left:653px;top:260px;width:50px;height:20px;border-bottom:1px solid #e6e6e6;border-right:1px solid #e6e6e6;text-align:right;padding-right:2px;">0</div>
<div class="c" style="left:703px;top:260px;width:50px;height:20px;border-bottom:1px solid #e6e6e6;border-right:1px solid #e6e6e6;text-align:right;padding-right:2px;">0</div>
<div class="c" style="left:753px;top:260px;width:50px;height:20px;border-bottom:1px solid #e6e6e6;border-right:1px solid #e6e6e6;text-align:right;padding-right:2px;">0</div>
<div class="c" style="left:803px;top:260px;width:50px;height:20px;border-bottom:1px solid #e6e6e6;border-right:1px solid #e6e6e6;text-align:right;padding-right:2px;"></div>
<div class="c h" style="left:0;top:280px;width:33px;height:20px;border-right:1px solid #a0a0a0;border-bottom:1px solid #a0a0a0;text-align:right;padding-right:3px">14</div>
<div class="c" style="left:33px;top:280px;width:120px;height:20px;border-bottom:1px solid #e6e6e6;border-right:1px solid #e6e6e6;padding-left:3px;"><span style="font-size:13px;letter-spacing:-1px;margin-right:1px;position:relative;top:-1px">栗林</span></div>
<div class="c" style="left:153px;top:280px;width:120px;height:20px;border-bottom:1px solid #e6e6e6;border-right:1px solid #e6e6e6;padding-left:3px;">ktdmt</div>
<div class="c" style="left:273px;top:280px;width:60px;height:20px;border-bottom:1px solid #e6e6e6;border-right:1px solid #e6e6e6;text-align:right;padding-right:2px;">37.84</div>
<div class="c" style="left:333px;top:280px;width:60px;height:20px;border-bottom:1px solid #e6e6e6;border-right:1px solid #e6e6e6;text-align:right;padding-right:2px;">22.258</div>
<div class="c" style="left:393px;top:280px;width:50px;height:20px;border-bottom:1px solid #e6e6e6;border-right:1px solid #e6e6e6;text-align:right;padding-right:2px;">0.01</div>
<div class="c" style="left:443px;top:280px;width:60px;height:20px;border-bottom:1px solid #e6e6e6;border-right:1px solid #e6e6e6;text-align:right;padding-right:2px;">1.7</div>
<div class="c" style="left:503px;top:280px;width:50px;height:20px;border-bottom:1px solid #e6e6e6;border-right:1px solid #e6e6e6;text-align:right;padding-right:2px;">0</div>
<div class="c" style="left:553px;top:280px;width:50px;height:20px;border-bottom:1px solid #e6e6e6;border-right:1px solid #e6e6e6;text-align:right;padding-right:2px;">0</div>
<div class="c" style="left:603px;top:280px;width:50px;height:20px;border-bottom:1px solid #e6e6e6;border-right:1px solid #e6e6e6;text-align:right;padding-right:2px;">3</div>
<div class="c" style="left:653px;top:280px;width:50px;height:20px;border-bottom:1px solid #e6e6e6;border-right:1px solid #e6e6e6;text-align:right;padding-right:2px;">2</div>
<div class="c" style="left:703px;top:280px;width:50px;height:20px;border-bottom:1px solid #e6e6e6;border-right:1px solid #e6e6e6;text-align:right;padding-right:2px;">0</div>
<div class="c" style="left:753px;top:280px;width:50px;height:20px;border-bottom:1px solid #e6e6e6;border-right:1px solid #e6e6e6;text-align:right;padding-right:2px;">1</div>
<div class="c" style="left:803px;top:280px;width:50px;height:20px;border-bottom:1px solid #e6e6e6;border-right:1px solid #e6e6e6;text-align:right;padding-right:2px;"></div>
<div class="c h" style="left:0;top:300px;width:33px;height:20px;border-right:1px solid #a0a0a0;border-bottom:1px solid #a0a0a0;text-align:right;padding-right:3px">15</div>
<div class="c" style="left:33px;top:300px;width:120px;height:20px;border-bottom:1px solid #e6e6e6;border-right:1px solid #e6e6e6;padding-left:3px;">MC<span style="font-size:13px;letter-spacing:-1px;margin-right:1px;position:relative;top:-1px">記事化</span></div>
<div class="c" style="left:153px;top:300px;width:120px;height:20px;border-bottom:1px solid #e6e6e6;border-right:1px solid #e6e6e6;padding-left:3px;">kjkMC</div>
<div class="c" style="left:273px;top:300px;width:60px;height:20px;border-bottom:1px solid #e6e6e6;border-right:1px solid #e6e6e6;text-align:right;padding-right:2px;">40.52</div>
<div class="c" style="left:333px;top:300px;width:60px;height:20px;border-bottom:1px solid #e6e6e6;border-right:1px solid #e6e6e6;text-align:right;padding-right:2px;">225.111</div>
<div class="c" style="left:393px;top:300px;width:50px;height:20px;border-bottom:1px solid #e6e6e6;border-right:1px solid #e6e6e6;text-align:right;padding-right:2px;">0.02</div>
<div class="c" style="left:443px;top:300px;width:60px;height:20px;border-bottom:1px solid #e6e6e6;border-right:1px solid #e6e6e6;text-align:right;padding-right:2px;">0.18</div>
<div class="c" style="left:503px;top:300px;width:50px;height:20px;border-bottom:1px solid #e6e6e6;border-right:1px solid #e6e6e6;text-align:right;padding-right:2px;">0</div>
<div class="c" style="left:553px;top:300px;width:50px;height:20px;border-bottom:1px solid #e6e6e6;border-right:1px solid #e6e6e6;text-align:right;padding-right:2px;">0</div>
<div class="c" style="left:603px;top:300px;width:50px;height:20px;border-bottom:1px solid #e6e6e6;border-right:1px solid #e6e6e6;text-align:right;padding-right:2px;">2</div>
<div class="c" style="left:653px;top:300px;width:50px;height:20px;border-bottom:1px solid #e6e6e6;border-right:1px solid #e6e6e6;text-align:right;padding-right:2px;">4</div>
<div class="c" style="left:703px;top:300px;width:50px;height:20px;border-bottom:1px solid #e6e6e6;border-right:1px solid #e6e6e6;text-align:right;padding-right:2px;">0</div>
<div class="c" style="left:753px;top:300px;width:50px;height:20px;border-bottom:1px solid #e6e6e6;border-right:1px solid #e6e6e6;text-align:right;padding-right:2px;">0</div>
<div class="c" style="left:803px;top:300px;width:50px;height:20px;border-bottom:1px solid #e6e6e6;border-right:1px solid #e6e6e6;text-align:right;padding-right:2px;"></div>
<div class="c h" style="left:0;top:320px;width:33px;height:20px;border-right:1px solid #a0a0a0;border-bottom:1px solid #a0a0a0;text-align:right;padding-right:3px">16</div>
<div class="c" style="left:33px;top:320px;width:120px;height:20px;border-bottom:1px solid #e6e6e6;border-right:1px solid #e6e6e6;padding-left:3px;"><span style="font-size:13px;letter-spacing:-1px;margin-right:1px;position:relative;top:-1px">霊足引</span><span style="display:inline-block;width:10.50px;position:relative;top:-1px;white-space:nowrap"><span style="display:inline-block;font-size:13px;letter-spacing:-1px;transform:scaleX(0.875);transform-origin:0 0">き</span></span></div>
<div class="c" style="left:153px;top:320px;width:120px;height:20px;border-bottom:1px solid #e6e6e6;border-right:1px solid #e6e6e6;padding-left:3px;">ashkri</div>
<div class="c" style="left:273px;top:320px;width:60px;height:20px;border-bottom:1px solid #e6e6e6;border-right:1px solid #e6e6e6;text-align:right;padding-right:2px;">22.91</div>
<div class="c" style="left:333px;top:320px;width:60px;height:20px;border-bottom:1px solid #e6e6e6;border-right:1px solid #e6e6e6;text-align:right;padding-right:2px;">99.608</div>
<div class="c" style="left:393px;top:320px;width:50px;height:20px;border-bottom:1px solid #e6e6e6;border-right:1px solid #e6e6e6;text-align:right;padding-right:2px;">0.03</div>
<div class="c" style="left:443px;top:320px;width:60px;height:20px;border-bottom:1px solid #e6e6e6;border-right:1px solid #e6e6e6;text-align:right;padding-right:2px;">0.23</div>
<div class="c" style="left:503px;top:320px;width:50px;height:20px;border-bottom:1px solid #e6e6e6;border-right:1px solid #e6e6e6;text-align:right;padding-right:2px;">0</div>
<div class="c" style="left:553px;top:320px;width:50px;height:20px;border-bottom:1px solid #e6e6e6;border-right:1px solid #e6e6e6;text-align:right;padding-right:2px;">0</div>
<div class="c" style="left:603px;top:320px;width:50px;height:20px;border-bottom:1px solid #e6e6e6;border-right:1px solid #e6e6e6;text-align:right;padding-right:2px;">2</div>
<div class="c" style="left:653px;top:320px;width:50px;height:20px;border-bottom:1px solid #e6e6e6;border-right:1px solid #e6e6e6;text-align:right;padding-right:2px;">3</div>
<div class="c" style="left:703px;top:320px;width:50px;height:20px;border-bottom:1px solid #e6e6e6;border-right:1px solid #e6e6e6;text-align:right;padding-right:2px;">0</div>
<div class="c" style="left:753px;top:320px;width:50px;height:20px;border-bottom:1px solid #e6e6e6;border-right:1px solid #e6e6e6;text-align:right;padding-right:2px;">0</div>
<div class="c" style="left:803px;top:320px;width:50px;height:20px;border-bottom:1px solid #e6e6e6;border-right:1px solid #e6e6e6;text-align:right;padding-right:2px;"></div>
<div class="c h" style="left:0;top:340px;width:33px;height:20px;border-right:1px solid #a0a0a0;border-bottom:1px solid #a0a0a0;text-align:right;padding-right:3px">17</div>
<div class="c" style="left:33px;top:340px;width:120px;height:20px;border-bottom:1px solid #e6e6e6;border-right:1px solid #e6e6e6;padding-left:3px;">NHK<span style="display:inline-block;width:21.00px;position:relative;top:-1px;white-space:nowrap"><span style="display:inline-block;font-size:13px;letter-spacing:-1px;transform:scaleX(0.875);transform-origin:0 0">いち</span></span></div>
<div class="c" style="left:153px;top:340px;width:120px;height:20px;border-bottom:1px solid #e6e6e6;border-right:1px solid #e6e6e6;padding-left:3px;">itNHK</div>
<div class="c" style="left:273px;top:340px;width:60px;height:20px;border-bottom:1px solid #e6e6e6;border-right:1px solid #e6e6e6;text-align:right;padding-right:2px;">50.87</div>
<div class="c" style="left:333px;top:340px;width:60px;height:20px;border-bottom:1px solid #e6e6e6;border-right:1px solid #e6e6e6;text-align:right;padding-right:2px;">339.133</div>
<div class="c" style="left:393px;top:340px;width:50px;height:20px;border-bottom:1px solid #e6e6e6;border-right:1px solid #e6e6e6;text-align:right;padding-right:2px;">0.01</div>
<div class="c" style="left:443px;top:340px;width:60px;height:20px;border-bottom:1px solid #e6e6e6;border-right:1px solid #e6e6e6;text-align:right;padding-right:2px;">0.15</div>
<div class="c" style="left:503px;top:340px;width:50px;height:20px;border-bottom:1px solid #e6e6e6;border-right:1px solid #e6e6e6;text-align:right;padding-right:2px;">0</div>
<div class="c" style="left:553px;top:340px;width:50px;height:20px;border-bottom:1px solid #e6e6e6;border-right:1px solid #e6e6e6;text-align:right;padding-right:2px;">0</div>
<div class="c" style="left:603px;top:340px;width:50px;height:20px;border-bottom:1px solid #e6e6e6;border-right:1px solid #e6e6e6;text-align:right;padding-right:2px;">2</div>
<div class="c" style="left:653px;top:340px;width:50px;height:20px;border-bottom:1px solid #e6e6e6;border-right:1px solid #e6e6e6;text-align:right;padding-right:2px;">2</div>
<div class="c" style="left:703px;top:340px;width:50px;height:20px;border-bottom:1px solid #e6e6e6;border-right:1px solid #e6e6e6;text-align:right;padding-right:2px;">0</div>
<div class="c" style="left:753px;top:340px;width:50px;height:20px;border-bottom:1px solid #e6e6e6;border-right:1px solid #e6e6e6;text-align:right;padding-right:2px;">0</div>
<div class="c" style="left:803px;top:340px;width:50px;height:20px;border-bottom:1px solid #e6e6e6;border-right:1px solid #e6e6e6;text-align:right;padding-right:2px;"></div>
<div class="c h" style="left:0;top:360px;width:33px;height:20px;border-right:1px solid #a0a0a0;border-bottom:1px solid #a0a0a0;text-align:right;padding-right:3px">18</div>
<div class="c" style="left:33px;top:360px;width:120px;height:20px;border-bottom:1px solid #e6e6e6;border-right:1px solid #e6e6e6;padding-left:3px;"><span style="font-size:13px;letter-spacing:-1px;margin-right:1px;position:relative;top:-1px">神清</span><span style="display:inline-block;width:10.50px;position:relative;top:-1px;white-space:nowrap"><span style="display:inline-block;font-size:13px;letter-spacing:-1px;transform:scaleX(0.875);transform-origin:0 0">め</span></span></div>
<div class="c" style="left:153px;top:360px;width:120px;height:20px;border-bottom:1px solid #e6e6e6;border-right:1px solid #e6e6e6;padding-left:3px;">kmkym</div>
<div class="c" style="left:273px;top:360px;width:60px;height:20px;border-bottom:1px solid #e6e6e6;border-right:1px solid #e6e6e6;text-align:right;padding-right:2px;">14.55</div>
<div class="c" style="left:333px;top:360px;width:60px;height:20px;border-bottom:1px solid #e6e6e6;border-right:1px solid #e6e6e6;text-align:right;padding-right:2px;">55.961</div>
<div class="c" style="left:393px;top:360px;width:50px;height:20px;border-bottom:1px solid #e6e6e6;border-right:1px solid #e6e6e6;text-align:right;padding-right:2px;">0.06</div>
<div class="c" style="left:443px;top:360px;width:60px;height:20px;border-bottom:1px solid #e6e6e6;border-right:1px solid #e6e6e6;text-align:right;padding-right:2px;">0.26</div>
<div class="c" style="left:503px;top:360px;width:50px;height:20px;border-bottom:1px solid #e6e6e6;border-right:1px solid #e6e6e6;text-align:right;padding-right:2px;">0</div>
<div class="c" style="left:553px;top:360px;width:50px;height:20px;border-bottom:1px solid #e6e6e6;border-right:1px solid #e6e6e6;text-align:right;padding-right:2px;">0</div>
<div class="c" style="left:603px;top:360px;width:50px;height:20px;border-bottom:1px solid #e6e6e6;border-right:1px solid #e6e6e6;text-align:right;padding-right:2px;">2</div>
<div class="c" style="left:653px;top:360px;width:50px;height:20px;border-bottom:1px solid #e6e6e6;border-right:1px solid #e6e6e6;text-align:right;padding-right:2px;">2</div>
<div class="c" style="left:703px;top:360px;width:50px;height:20px;border-bottom:1px solid #e6e6e6;border-right:1px solid #e6e6e6;text-align:right;padding-right:2px;">0</div>
<div class="c" style="left:753px;top:360px;width:50px;height:20px;border-bottom:1px solid #e6e6e6;border-right:1px solid #e6e6e6;text-align:right;padding-right:2px;">0</div>
<div class="c" style="left:803px;top:360px;width:50px;height:20px;border-bottom:1px solid #e6e6e6;border-right:1px solid #e6e6e6;text-align:right;padding-right:2px;"></div>
<div class="c h" style="left:0;top:380px;width:33px;height:20px;border-right:1px solid #a0a0a0;border-bottom:1px solid #a0a0a0;text-align:right;padding-right:3px">19</div>
<div class="c" style="left:33px;top:380px;width:120px;height:20px;border-bottom:1px solid #e6e6e6;border-right:1px solid #e6e6e6;padding-left:3px;"><span style="display:inline-block;width:42.00px;position:relative;top:-1px;white-space:nowrap"><span style="display:inline-block;font-size:13px;letter-spacing:-1px;transform:scaleX(0.875);transform-origin:0 0">メディア</span></span><span style="font-size:13px;letter-spacing:-1px;margin-right:1px;position:relative;top:-1px">載</span><span style="display:inline-block;width:10.50px;position:relative;top:-1px;white-space:nowrap"><span style="display:inline-block;font-size:13px;letter-spacing:-1px;transform:scaleX(0.875);transform-origin:0 0">り</span></span></div>
<div class="c" style="left:153px;top:380px;width:120px;height:20px;border-bottom:1px solid #e6e6e6;border-right:1px solid #e6e6e6;padding-left:3px;">mdanr</div>
<div class="c" style="left:273px;top:380px;width:60px;height:20px;border-bottom:1px solid #e6e6e6;border-right:1px solid #e6e6e6;text-align:right;padding-right:2px;">26.11</div>
<div class="c" style="left:333px;top:380px;width:60px;height:20px;border-bottom:1px solid #e6e6e6;border-right:1px solid #e6e6e6;text-align:right;padding-right:2px;">174.066</div>
<div class="c" style="left:393px;top:380px;width:50px;height:20px;border-bottom:1px solid #e6e6e6;border-right:1px solid #e6e6e6;text-align:right;padding-right:2px;">0.02</div>
<div class="c" style="left:443px;top:380px;width:60px;height:20px;border-bottom:1px solid #e6e6e6;border-right:1px solid #e6e6e6;text-align:right;padding-right:2px;">0.15</div>
<div class="c" style="left:503px;top:380px;width:50px;height:20px;border-bottom:1px solid #e6e6e6;border-right:1px solid #e6e6e6;text-align:right;padding-right:2px;">0</div>
<div class="c" style="left:553px;top:380px;width:50px;height:20px;border-bottom:1px solid #e6e6e6;border-right:1px solid #e6e6e6;text-align:right;padding-right:2px;">0</div>
<div class="c" style="left:603px;top:380px;width:50px;height:20px;border-bottom:1px solid #e6e6e6;border-right:1px solid #e6e6e6;text-align:right;padding-right:2px;">2</div>
<div class="c" style="left:653px;top:380px;width:50px;height:20px;border-bottom:1px solid #e6e6e6;border-right:1px solid #e6e6e6;text-align:right;padding-right:2px;">1</div>
<div class="c" style="left:703px;top:380px;width:50px;height:20px;border-bottom:1px solid #e6e6e6;border-right:1px solid #e6e6e6;text-align:right;padding-right:2px;">0</div>
<div class="c" style="left:753px;top:380px;width:50px;height:20px;border-bottom:1px solid #e6e6e6;border-right:1px solid #e6e6e6;text-align:right;padding-right:2px;">0</div>
<div class="c" style="left:803px;top:380px;width:50px;height:20px;border-bottom:1px solid #e6e6e6;border-right:1px solid #e6e6e6;text-align:right;padding-right:2px;"></div>
<div class="c h" style="left:0;top:400px;width:33px;height:20px;border-right:1px solid #a0a0a0;border-bottom:1px solid #a0a0a0;text-align:right;padding-right:3px">20</div>
<div class="c" style="left:33px;top:400px;width:120px;height:20px;border-bottom:1px solid #e6e6e6;border-right:1px solid #e6e6e6;padding-left:3px;"><span style="font-size:13px;letter-spacing:-1px;margin-right:1px;position:relative;top:-1px">霊界日誌</span></div>
<div class="c" style="left:153px;top:400px;width:120px;height:20px;border-bottom:1px solid #e6e6e6;border-right:1px solid #e6e6e6;padding-left:3px;">rekai</div>
<div class="c" style="left:273px;top:400px;width:60px;height:20px;border-bottom:1px solid #e6e6e6;border-right:1px solid #e6e6e6;text-align:right;padding-right:2px;">12.5</div>
<div class="c" style="left:333px;top:400px;width:60px;height:20px;border-bottom:1px solid #e6e6e6;border-right:1px solid #e6e6e6;text-align:right;padding-right:2px;">100.5</div>
<div class="c" style="left:393px;top:400px;width:50px;height:20px;border-bottom:1px solid #e6e6e6;border-right:1px solid #e6e6e6;text-align:right;padding-right:2px;">0.01</div>
<div class="c" style="left:443px;top:400px;width:60px;height:20px;border-bottom:1px solid #e6e6e6;border-right:1px solid #e6e6e6;text-align:right;padding-right:2px;">0.12</div>
<div class="c" style="left:503px;top:400px;width:50px;height:20px;border-bottom:1px solid #e6e6e6;border-right:1px solid #e6e6e6;text-align:right;padding-right:2px;">0</div>
<div class="c" style="left:553px;top:400px;width:50px;height:20px;border-bottom:1px solid #e6e6e6;border-right:1px solid #e6e6e6;text-align:right;padding-right:2px;">0</div>
<div class="c" style="left:603px;top:400px;width:50px;height:20px;border-bottom:1px solid #e6e6e6;border-right:1px solid #e6e6e6;text-align:right;padding-right:2px;">1</div>
<div class="c" style="left:653px;top:400px;width:50px;height:20px;border-bottom:1px solid #e6e6e6;border-right:1px solid #e6e6e6;text-align:right;padding-right:2px;">1</div>
<div class="c" style="left:703px;top:400px;width:50px;height:20px;border-bottom:1px solid #e6e6e6;border-right:1px solid #e6e6e6;text-align:right;padding-right:2px;">0</div>
<div class="c" style="left:753px;top:400px;width:50px;height:20px;border-bottom:1px solid #e6e6e6;border-right:1px solid #e6e6e6;text-align:right;padding-right:2px;">0</div>
<div class="c" style="left:803px;top:400px;width:50px;height:20px;border-bottom:1px solid #e6e6e6;border-right:1px solid #e6e6e6;text-align:right;padding-right:2px;"></div>
<div style="position:absolute;left:0;top:403px;width:833px;height:17px;background:#f0f0f0"></div>
<svg width="17" height="17" style="position:absolute;left:0;top:403px"><path d="M9.5 4.5 L6 8.5 L9.5 12.5" fill="none" stroke="#606060" stroke-width="2"/></svg>
<div style="position:absolute;left:17px;top:404px;width:698px;height:15px;background:#cdcdcd"></div>
<div style="position:absolute;left:833px;top:0;width:17px;height:430px;background:#f0f0f0"></div>
<div style="position:absolute;left:834px;top:17px;width:15px;height:86px;background:#cdcdcd"></div>
<div style="position:absolute;left:816px;top:403px;width:17px;height:17px;background:#f0f0f0"></div>
<svg width="17" height="17" style="position:absolute;left:816px;top:403px"><path d="M7.5 4.5 L11 8.5 L7.5 12.5" fill="none" stroke="#606060" stroke-width="2"/></svg>
<svg width="17" height="17" style="position:absolute;left:833px;top:0px"><path d="M5 11 L8.5 7.5 L12 11" fill="none" stroke="#606060" stroke-width="2"/></svg>
<svg width="17" height="17" style="position:absolute;left:833px;top:386px"><path d="M4.5 7 L8.5 10.5 L12.5 7" fill="none" stroke="#606060" stroke-width="2"/></svg>
<div style="position:absolute;left:33px;top:20px;width:119px;height:19px;border:1px dotted #000;opacity:.8"></div>
</div></div>
<div style="position:absolute;left:1137px;top:144px;width:77px;height:21px;border:1px solid #7a7a7a;background:#f0f0f0;box-shadow:inset 0 0 0 1px #fff;text-align:right;padding-right:2px;line-height:20px">86</div>
</div></body></html>
